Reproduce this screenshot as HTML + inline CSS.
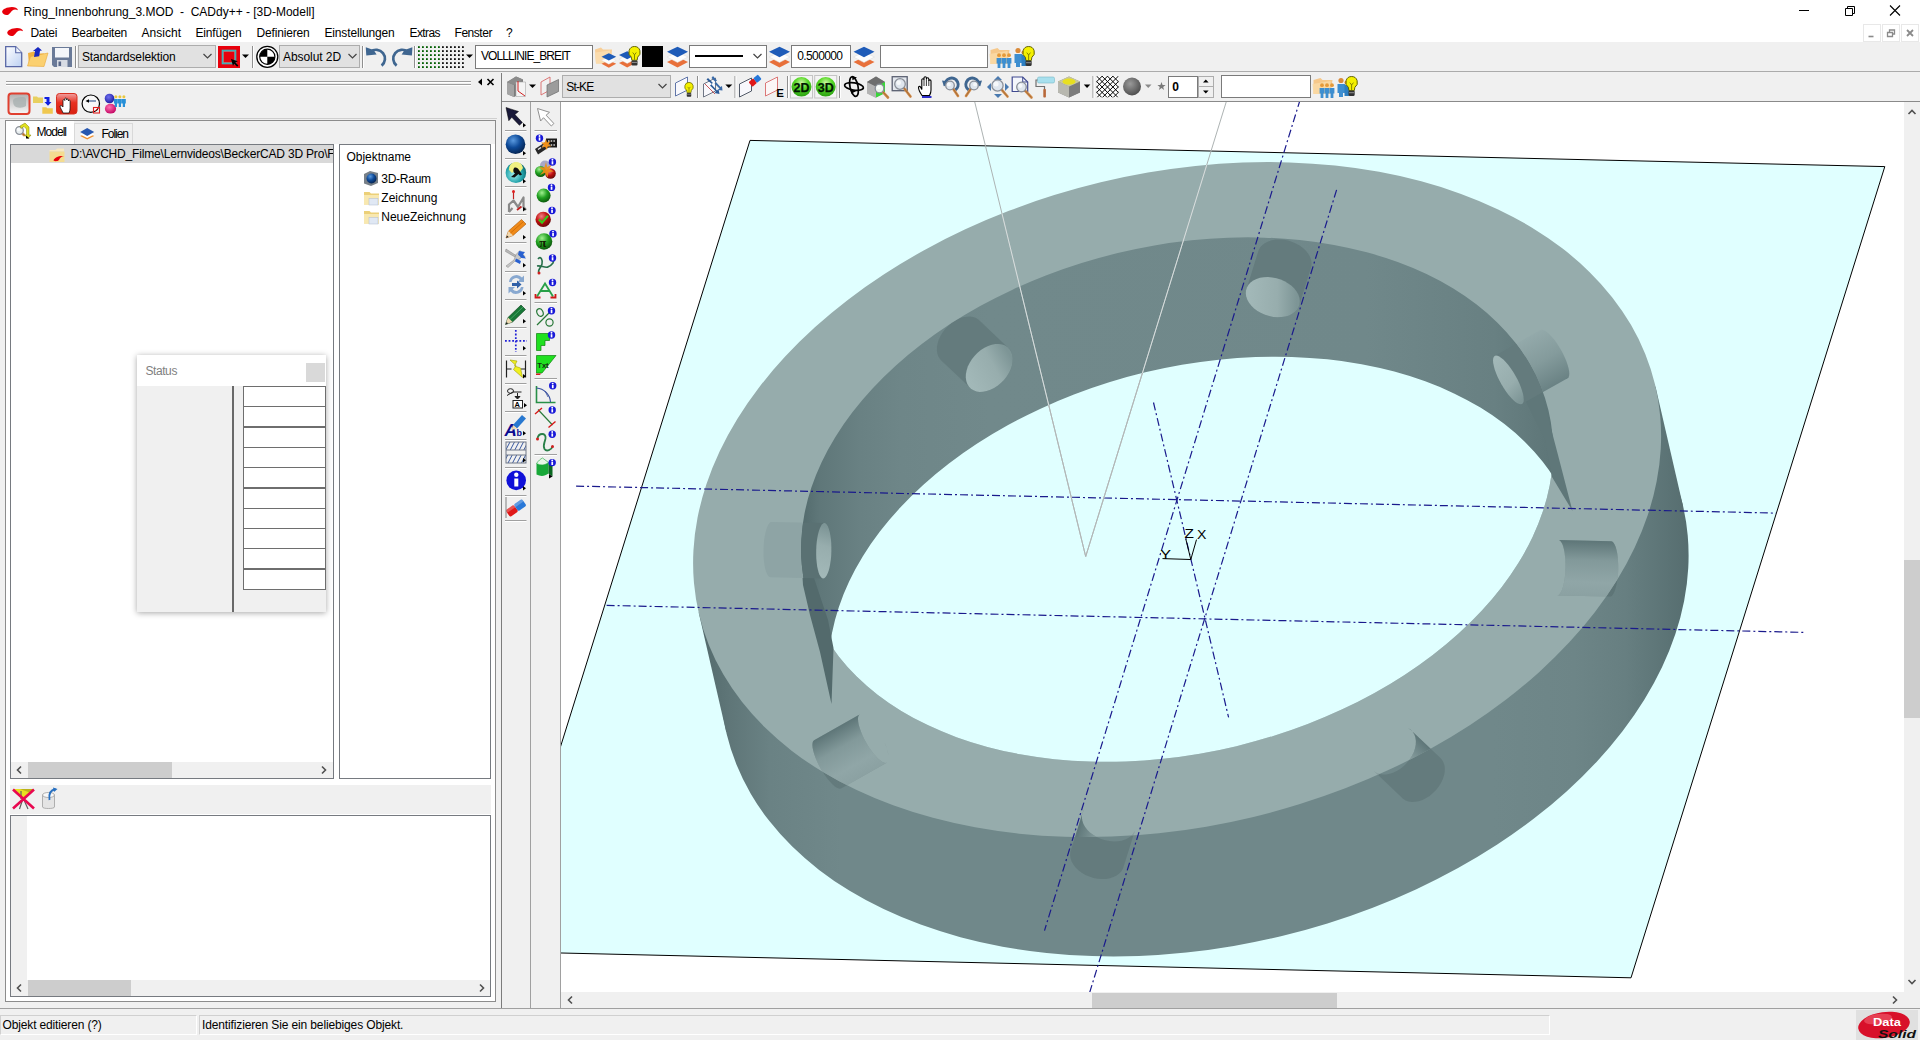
<!DOCTYPE html><html><head><meta charset="utf-8"><title>CADdy++</title><style>
html,body{margin:0;padding:0}
body{width:1920px;height:1040px;position:relative;overflow:hidden;background:#f0f0f0;font-family:"Liberation Sans",sans-serif;font-size:12px}
.t{position:absolute;white-space:pre;line-height:15px;height:15px}
.b{position:absolute;box-sizing:border-box}
</style></head><body>
<div class="b" style="left:0px;top:0px;width:1920px;height:42px;background:#fff;"></div>
<span class="t" style="left:23.5px;top:4.8px;font-size:12px;color:#000;letter-spacing:-0.009px;">Ring_Innenbohrung_3.MOD  -  CADdy++ - [3D-Modell]</span>
<span class="t" style="left:30.5px;top:25.8px;font-size:12px;color:#000;letter-spacing:-0.302px;">Datei</span>
<span class="t" style="left:71.5px;top:25.8px;font-size:12px;color:#000;letter-spacing:-0.254px;">Bearbeiten</span>
<span class="t" style="left:141.5px;top:25.8px;font-size:12px;color:#000;letter-spacing:0.021px;">Ansicht</span>
<span class="t" style="left:195.5px;top:25.8px;font-size:12px;color:#000;letter-spacing:-0.171px;">Einfügen</span>
<span class="t" style="left:256.5px;top:25.8px;font-size:12px;color:#000;letter-spacing:-0.169px;">Definieren</span>
<span class="t" style="left:324.5px;top:25.8px;font-size:12px;color:#000;letter-spacing:-0.158px;">Einstellungen</span>
<span class="t" style="left:409.5px;top:25.8px;font-size:12px;color:#000;letter-spacing:-0.584px;">Extras</span>
<span class="t" style="left:454.5px;top:25.8px;font-size:12px;color:#000;letter-spacing:-0.454px;">Fenster</span>
<span class="t" style="left:506.0px;top:25.8px;font-size:12px;color:#000;letter-spacing:-1.673px;">?</span>
<div class="b" style="left:0px;top:42px;width:1920px;height:29px;background:#f0f0f0;"></div>
<div class="b" style="left:0px;top:71px;width:1920px;height:1px;background:#ababab;"></div>
<div class="b" style="left:78px;top:45px;width:138px;height:23px;background:#e1e1e1;border:1px solid #adadad;"></div>
<span class="t" style="left:82.0px;top:49.8px;font-size:12px;color:#000;letter-spacing:-0.150px;">Standardselektion</span>
<div class="b" style="left:279px;top:45px;width:81px;height:23px;background:#e1e1e1;border:1px solid #adadad;"></div>
<span class="t" style="left:283.0px;top:49.8px;font-size:12px;color:#000;letter-spacing:-0.070px;">Absolut 2D</span>
<div class="b" style="left:475px;top:45px;width:118px;height:24px;background:#fff;border:1px solid #7a7a7a;"></div>
<span class="t" style="left:481.0px;top:48.8px;font-size:12px;color:#000;letter-spacing:-0.914px;">VOLLLINIE_BREIT</span>
<div class="b" style="left:642px;top:46px;width:21px;height:21px;background:#000;"></div>
<div class="b" style="left:689px;top:45px;width:78px;height:23px;background:#fff;border:1px solid #7a7a7a;"></div>
<div class="b" style="left:695px;top:55px;width:48px;height:2px;background:#000;"></div>
<div class="b" style="left:791px;top:45px;width:60px;height:23px;background:#fff;border:1px solid #7a7a7a;"></div>
<span class="t" style="left:797.3px;top:48.8px;font-size:12px;color:#000;letter-spacing:-0.631px;">0.500000</span>
<div class="b" style="left:880px;top:45px;width:108px;height:23px;background:#fff;border:1px solid #7a7a7a;"></div>
<div class="b" style="left:501px;top:73px;width:1px;height:935px;background:#7c7c7c;"></div>
<div class="b" style="left:562px;top:75px;width:109px;height:23px;background:#e1e1e1;border:1px solid #adadad;"></div>
<span class="t" style="left:566.3px;top:79.8px;font-size:12px;color:#000;letter-spacing:-0.869px;">St-KE</span>
<div class="b" style="left:1168px;top:76px;width:30px;height:22px;background:#fff;border:1px solid #7a7a7a;"></div>
<span class="t" style="left:1172.3px;top:79.8px;font-size:12px;color:#000;letter-spacing:-0.373px;font-weight:bold;">0</span>
<div class="b" style="left:1198px;top:76px;width:16px;height:22px;background:#f0f0f0;border:1px solid #adadad;"></div>
<div class="b" style="left:1198px;top:86px;width:16px;height:1px;background:#adadad;"></div>
<div class="b" style="left:1221px;top:75px;width:90px;height:23px;background:#fff;border:1px solid #7a7a7a;"></div>
<div class="b" style="left:502px;top:101px;width:1418px;height:1px;background:#8a8a8a;"></div>
<div class="b" style="left:530px;top:102px;width:1px;height:906px;background:#a0a0a0;"></div>
<div class="b" style="left:560px;top:102px;width:1px;height:906px;background:#a0a0a0;"></div>
<div class="b" style="left:1904px;top:102px;width:16px;height:906px;background:#f0f0f0;"></div>
<div class="b" style="left:561px;top:992px;width:1359px;height:16px;background:#f0f0f0;"></div>
<div class="b" style="left:1904px;top:560px;width:16px;height:158px;background:#cdcdcd;"></div>
<div class="b" style="left:1092px;top:993px;width:245px;height:15px;background:#cdcdcd;"></div>
<div class="b" style="left:0px;top:1008px;width:1920px;height:1px;background:#a0a0a0;"></div>
<div class="b" style="left:0px;top:1015px;width:197px;height:20px;border:1px solid #d0d0d0;border-right-color:#fff;border-bottom-color:#fff"></div>
<div class="b" style="left:199px;top:1015px;width:1351px;height:20px;border:1px solid #d0d0d0;border-right-color:#fff;border-bottom-color:#fff"></div>
<span class="t" style="left:2.6px;top:1017.8px;font-size:12px;color:#000;letter-spacing:-0.152px;">Objekt editieren (?)</span>
<span class="t" style="left:202.0px;top:1017.8px;font-size:12px;color:#000;letter-spacing:-0.134px;">Identifizieren Sie ein beliebiges Objekt.</span>
<div class="b" style="left:6px;top:81px;width:465px;height:1px;background:#a0a0a0;"></div>
<div class="b" style="left:6px;top:82px;width:465px;height:1px;background:#fff;"></div>
<div class="b" style="left:6px;top:84px;width:465px;height:1px;background:#a0a0a0;"></div>
<div class="b" style="left:6px;top:85px;width:465px;height:1px;background:#fff;"></div>
<div class="b" style="left:0px;top:118px;width:497px;height:1px;background:#cfcfcf;"></div>
<div class="b" style="left:5px;top:120px;width:491px;height:882px;background:#fff;border:1px solid #8c8c8c;"></div>
<div class="b" style="left:6px;top:121px;width:489px;height:23px;background:#f0f0f0;"></div>
<div class="b" style="left:6px;top:121px;width:68px;height:24px;background:#fff;"></div>
<div class="b" style="left:74px;top:123px;width:59px;height:21px;background:#f0f0f0;border:1px solid #d9d9d9;border-bottom:none"></div>
<span class="t" style="left:36.6px;top:124.8px;font-size:12px;color:#000;letter-spacing:-0.991px;">Modell</span>
<span class="t" style="left:101.5px;top:126.8px;font-size:12px;color:#000;letter-spacing:-1.030px;">Folien</span>
<div class="b" style="left:10px;top:144px;width:324px;height:635px;background:#fff;border:1px solid #767a80;"></div>
<div class="b" style="left:11px;top:145px;width:322px;height:18px;background:#d9d9d9;"></div>
<div class="b" style="left:11px;top:145px;width:322px;height:18px;overflow:hidden"><span class="t" style="left:59.6px;top:1.8px;font-size:12px;color:#000;letter-spacing:-0.182px;">D:\AVCHD_Filme\Lernvideos\BeckerCAD 3D Pro\F</span></div>
<div class="b" style="left:11px;top:762px;width:322px;height:16px;background:#f0f0f0;"></div>
<div class="b" style="left:28px;top:762px;width:144px;height:16px;background:#cdcdcd;"></div>
<div class="b" style="left:339px;top:144px;width:152px;height:635px;background:#fff;border:1px solid #767a80;"></div>
<span class="t" style="left:346.5px;top:149.8px;font-size:12px;color:#000;letter-spacing:-0.019px;">Objektname</span>
<span class="t" style="left:381.3px;top:171.8px;font-size:12px;color:#000;letter-spacing:-0.263px;">3D-Raum</span>
<span class="t" style="left:381.3px;top:190.8px;font-size:12px;color:#000;letter-spacing:0.018px;">Zeichnung</span>
<span class="t" style="left:381.3px;top:209.8px;font-size:12px;color:#000;letter-spacing:-0.017px;">NeueZeichnung</span>
<div class="b" style="left:10px;top:785px;width:481px;height:29px;background:#f0f0f0;"></div>
<div class="b" style="left:10px;top:815px;width:481px;height:182px;background:#fff;border:1px solid #767a80;"></div>
<div class="b" style="left:11px;top:816px;width:16px;height:164px;background:#f0f0f0;"></div>
<div class="b" style="left:11px;top:980px;width:479px;height:16px;background:#f0f0f0;"></div>
<div class="b" style="left:28px;top:980px;width:103px;height:16px;background:#cdcdcd;"></div>
<div class="b" style="left:137px;top:355px;width:189px;height:257px;background:#f0f0f0;box-shadow:0 1px 6px rgba(0,0,0,.35)"></div>
<div class="b" style="left:137px;top:355px;width:189px;height:31px;background:#fff;"></div>
<span class="t" style="left:145.4px;top:363.8px;font-size:12px;color:#7f7f7f;letter-spacing:-0.403px;">Status</span>
<div class="b" style="left:306px;top:363px;width:19px;height:19px;background:#d9d9d9;"></div>
<div class="b" style="left:232px;top:386px;width:2px;height:226px;background:#696969;"></div>
<div class="b" style="left:243px;top:386px;width:83px;height:21px;background:#fff;border:1px solid #6e6e6e;"></div>
<div class="b" style="left:243px;top:406px;width:83px;height:21px;background:#fff;border:1px solid #6e6e6e;"></div>
<div class="b" style="left:243px;top:427px;width:83px;height:21px;background:#fff;border:1px solid #6e6e6e;"></div>
<div class="b" style="left:243px;top:447px;width:83px;height:21px;background:#fff;border:1px solid #6e6e6e;"></div>
<div class="b" style="left:243px;top:467px;width:83px;height:21px;background:#fff;border:1px solid #6e6e6e;"></div>
<div class="b" style="left:243px;top:488px;width:83px;height:21px;background:#fff;border:1px solid #6e6e6e;"></div>
<div class="b" style="left:243px;top:508px;width:83px;height:21px;background:#fff;border:1px solid #6e6e6e;"></div>
<div class="b" style="left:243px;top:528px;width:83px;height:21px;background:#fff;border:1px solid #6e6e6e;"></div>
<div class="b" style="left:243px;top:548px;width:83px;height:21px;background:#fff;border:1px solid #6e6e6e;"></div>
<div class="b" style="left:243px;top:569px;width:83px;height:21px;background:#fff;border:1px solid #6e6e6e;"></div>
<svg width="1920" height="1040" viewBox="0 0 1920 1040" style="position:absolute;left:0;top:0">
<g transform="translate(1.9,7)"><path d="M0.2,4.6C0.8,2 5,0.2 10,0C13,0 15.6,1.2 16.1,3.2C14,2.3 12,2.4 10.5,3.4C9,4.6 8,6.6 6.4,7.7C4,8.5 0.3,7.6 0.2,4.6Z" fill="#e8000a"/></g><g transform="translate(7,28)"><path d="M0.2,4.6C0.8,2 5,0.2 10,0C13,0 15.6,1.2 16.1,3.2C14,2.3 12,2.4 10.5,3.4C9,4.6 8,6.6 6.4,7.7C4,8.5 0.3,7.6 0.2,4.6Z" fill="#e8000a"/></g><g transform="translate(5,46)"><defs><linearGradient id="gnd" x1="0" y1="0" x2="1" y2="1"><stop offset="0" stop-color="#fff"/><stop offset="1" stop-color="#bcd0f2"/></linearGradient></defs><path d="M.7,.7h10l6,6v14h-16z" fill="url(#gnd)" stroke="#5867a6" stroke-width="1.3"/><path d="M10.7,.7v6h6" fill="#eef3fc" stroke="#5867a6" stroke-width="1.1"/></g><g transform="translate(27,47)"><path d="M1,6l6,-1.5l2,2h8l-1,12h-14z" fill="#f0b040"/><path d="M0.5,19l3,-9.5l17.5,-3.5l-4,13.5z" fill="#fbd070" stroke="#e8a838" stroke-width=".6"/><path d="M7,10l1,-6h-2l5,-4l4,3.5l-2,.3l-.8,5.5z" fill="#1828c0"/></g><g transform="translate(52,47)"><path d="M0,0h20v20h-18l-2,-2z" fill="#6a7a98"/><rect x="3" y="1" width="14" height="9.5" fill="#f4f6fa"/><rect x="5" y="13" width="10.5" height="7" fill="#d8dce4"/><rect x="6.5" y="14.5" width="2.6" height="4.5" fill="#5a6888"/></g><path d="M75.5,46V68" stroke="#8f8f8f" stroke-width="1"/><path d="M76.5,46V68" stroke="#fff" stroke-width="1"/><path d="M203.5,54l4,4l4,-4" fill="none" stroke="#444" stroke-width="1.2"/><g transform="translate(218,46)"><rect width="22" height="22" fill="#e8000c"/><rect x="4.3" y="4.3" width="13.4" height="13.4" fill="none" stroke="#30c0c8" stroke-width="1.2"/><rect x="5.4" y="5.4" width="11.2" height="11.2" fill="none" stroke="#909090" stroke-width=".8"/><path d="M13,13l6.8,2.2l-2.4,1.2l3,3l-1.3,1.3l-3,-3l-1.1,2.4z" fill="#000"/></g><path d="M242,54.5h7l-3.5,3.5z" fill="#000"/><path d="M252.5,46V68" stroke="#8f8f8f" stroke-width="1"/><path d="M253.5,46V68" stroke="#fff" stroke-width="1"/><g transform="translate(267.3,56.8)"><circle r="10.5" fill="#fff" stroke="#000" stroke-width="1.3"/><circle r="7.6" fill="#fff" stroke="#000" stroke-width="1.2"/><path d="M0,0v-7.6a7.6,7.6 0 0 0 -7.6,7.6zM0,0v7.6a7.6,7.6 0 0 0 7.6,-7.6z" fill="#000"/></g><path d="M348.5,54l4,4l4,-4" fill="none" stroke="#444" stroke-width="1.2"/><path d="M362.5,46V68" stroke="#8f8f8f" stroke-width="1"/><path d="M363.5,46V68" stroke="#fff" stroke-width="1"/><g transform="translate(366,47)"><path d="M4.5,4.7A8.8,8.8 0 1 1 15.6,18.6" fill="none" stroke="#3f6690" stroke-width="2.7"/><path d="M-0.2,0.3L7.6,3L10.6,7.6L0.3,8.6Z" fill="#3f6690"/></g><g transform="translate(412.2,47) scale(-1,1)"><path d="M4.5,4.7A8.8,8.8 0 1 1 15.6,18.6" fill="none" stroke="#3f6690" stroke-width="2.7"/><path d="M-0.2,0.3L7.6,3L10.6,7.6L0.3,8.6Z" fill="#3f6690"/></g><path d="M414.5,46V68" stroke="#8f8f8f" stroke-width="1"/><path d="M415.5,46V68" stroke="#fff" stroke-width="1"/><rect x="418.0" y="46.2" width="1.8" height="1.8" fill="#005c00"/><rect x="422.0" y="46.2" width="1.8" height="1.8" fill="#005c00"/><rect x="426.0" y="46.2" width="1.8" height="1.8" fill="#005c00"/><rect x="430.0" y="46.2" width="1.8" height="1.8" fill="#005c00"/><rect x="434.0" y="46.2" width="1.8" height="1.8" fill="#005c00"/><rect x="438.0" y="46.2" width="1.8" height="1.8" fill="#005c00"/><rect x="442.0" y="46.2" width="1.8" height="1.8" fill="#111"/><rect x="446.0" y="46.2" width="1.8" height="1.8" fill="#111"/><rect x="450.0" y="46.2" width="1.8" height="1.8" fill="#111"/><rect x="454.0" y="46.2" width="1.8" height="1.8" fill="#111"/><rect x="458.0" y="46.2" width="1.8" height="1.8" fill="#111"/><rect x="462.0" y="46.2" width="1.8" height="1.8" fill="#111"/><rect x="418.0" y="50.2" width="1.8" height="1.8" fill="#005c00"/><rect x="422.0" y="50.2" width="1.8" height="1.8" fill="#005c00"/><rect x="426.0" y="50.2" width="1.8" height="1.8" fill="#005c00"/><rect x="430.0" y="50.2" width="1.8" height="1.8" fill="#005c00"/><rect x="434.0" y="50.2" width="1.8" height="1.8" fill="#005c00"/><rect x="438.0" y="50.2" width="1.8" height="1.8" fill="#005c00"/><rect x="442.0" y="50.2" width="1.8" height="1.8" fill="#111"/><rect x="446.0" y="50.2" width="1.8" height="1.8" fill="#111"/><rect x="450.0" y="50.2" width="1.8" height="1.8" fill="#111"/><rect x="454.0" y="50.2" width="1.8" height="1.8" fill="#111"/><rect x="458.0" y="50.2" width="1.8" height="1.8" fill="#111"/><rect x="462.0" y="50.2" width="1.8" height="1.8" fill="#111"/><rect x="418.0" y="54.2" width="1.8" height="1.8" fill="#005c00"/><rect x="422.0" y="54.2" width="1.8" height="1.8" fill="#005c00"/><rect x="426.0" y="54.2" width="1.8" height="1.8" fill="#005c00"/><rect x="430.0" y="54.2" width="1.8" height="1.8" fill="#005c00"/><rect x="434.0" y="54.2" width="1.8" height="1.8" fill="#005c00"/><rect x="438.0" y="54.2" width="1.8" height="1.8" fill="#005c00"/><rect x="442.0" y="54.2" width="1.8" height="1.8" fill="#111"/><rect x="446.0" y="54.2" width="1.8" height="1.8" fill="#111"/><rect x="450.0" y="54.2" width="1.8" height="1.8" fill="#111"/><rect x="454.0" y="54.2" width="1.8" height="1.8" fill="#111"/><rect x="458.0" y="54.2" width="1.8" height="1.8" fill="#111"/><rect x="462.0" y="54.2" width="1.8" height="1.8" fill="#111"/><rect x="418.0" y="58.2" width="1.8" height="1.8" fill="#005c00"/><rect x="422.0" y="58.2" width="1.8" height="1.8" fill="#005c00"/><rect x="426.0" y="58.2" width="1.8" height="1.8" fill="#005c00"/><rect x="430.0" y="58.2" width="1.8" height="1.8" fill="#005c00"/><rect x="434.0" y="58.2" width="1.8" height="1.8" fill="#005c00"/><rect x="438.0" y="58.2" width="1.8" height="1.8" fill="#005c00"/><rect x="442.0" y="58.2" width="1.8" height="1.8" fill="#111"/><rect x="446.0" y="58.2" width="1.8" height="1.8" fill="#111"/><rect x="450.0" y="58.2" width="1.8" height="1.8" fill="#111"/><rect x="454.0" y="58.2" width="1.8" height="1.8" fill="#111"/><rect x="458.0" y="58.2" width="1.8" height="1.8" fill="#111"/><rect x="462.0" y="58.2" width="1.8" height="1.8" fill="#111"/><rect x="418.0" y="62.2" width="1.8" height="1.8" fill="#005c00"/><rect x="422.0" y="62.2" width="1.8" height="1.8" fill="#005c00"/><rect x="426.0" y="62.2" width="1.8" height="1.8" fill="#005c00"/><rect x="430.0" y="62.2" width="1.8" height="1.8" fill="#005c00"/><rect x="434.0" y="62.2" width="1.8" height="1.8" fill="#005c00"/><rect x="438.0" y="62.2" width="1.8" height="1.8" fill="#005c00"/><rect x="442.0" y="62.2" width="1.8" height="1.8" fill="#111"/><rect x="446.0" y="62.2" width="1.8" height="1.8" fill="#111"/><rect x="450.0" y="62.2" width="1.8" height="1.8" fill="#111"/><rect x="454.0" y="62.2" width="1.8" height="1.8" fill="#111"/><rect x="458.0" y="62.2" width="1.8" height="1.8" fill="#111"/><rect x="462.0" y="62.2" width="1.8" height="1.8" fill="#111"/><rect x="418.0" y="66.2" width="1.8" height="1.8" fill="#005c00"/><rect x="422.0" y="66.2" width="1.8" height="1.8" fill="#005c00"/><rect x="426.0" y="66.2" width="1.8" height="1.8" fill="#005c00"/><rect x="430.0" y="66.2" width="1.8" height="1.8" fill="#005c00"/><rect x="434.0" y="66.2" width="1.8" height="1.8" fill="#005c00"/><rect x="438.0" y="66.2" width="1.8" height="1.8" fill="#005c00"/><rect x="442.0" y="66.2" width="1.8" height="1.8" fill="#111"/><rect x="446.0" y="66.2" width="1.8" height="1.8" fill="#111"/><rect x="450.0" y="66.2" width="1.8" height="1.8" fill="#111"/><rect x="454.0" y="66.2" width="1.8" height="1.8" fill="#111"/><rect x="458.0" y="66.2" width="1.8" height="1.8" fill="#111"/><rect x="462.0" y="66.2" width="1.8" height="1.8" fill="#111"/><path d="M466,54.5h7l-3.5,3.5z" fill="#000"/><g transform="translate(595,46.5)"><path d="M0,3l6,-2l2,2h9l-1,14h-15z" fill="#f8cf98"/><path d="M0,6l15,-2v13h-14z" fill="#fbdcae" opacity=".95"/><g transform="translate(6.5,6.5) scale(0.7)"><path d="M0,15.5l10.5,-5l10.5,5l-10.5,5.5z" fill="#e8703a"/><path d="M0,10.5l10.5,-5l10.5,5l-10.5,5.5z" fill="#fdfdfd" stroke="#d8d8d8" stroke-width=".5"/><path d="M0,5.2l10.5,-5l10.5,5l-10.5,5.5z" fill="#1e5bb8"/></g></g><g transform="translate(619,46)"><g transform="translate(0,5) scale(0.78)"><path d="M0,15.5l10.5,-5l10.5,5l-10.5,5.5z" fill="#e8703a"/><path d="M0,10.5l10.5,-5l10.5,5l-10.5,5.5z" fill="#fdfdfd" stroke="#d8d8d8" stroke-width=".5"/><path d="M0,5.2l10.5,-5l10.5,5l-10.5,5.5z" fill="#1e5bb8"/></g><g transform="translate(9.5,0)"><g transform="translate(0,0)"><path d="M6,0.5a5.6,5.8 0 0 1 3.2,10.6l-.6,3.2h-5.2l-.6,-3.2a5.6,5.8 0 0 1 3.2,-10.6z" fill="#f4f000" stroke="#555500" stroke-width=".9"/><path d="M4.2,6.5l1.8,2.3l1.8,-2.3M6,8.8v5" fill="none" stroke="#6b6b00" stroke-width=".8"/><rect x="3" y="14.5" width="6" height="5" rx="1" fill="#333"/><path d="M3.5,16.4h5" stroke="#aaa" stroke-width=".8"/></g></g></g><g transform="translate(667,46.5)"><path d="M0,15.5l10.5,-5l10.5,5l-10.5,5.5z" fill="#e8703a"/><path d="M0,10.5l10.5,-5l10.5,5l-10.5,5.5z" fill="#fdfdfd" stroke="#d8d8d8" stroke-width=".5"/><path d="M0,5.2l10.5,-5l10.5,5l-10.5,5.5z" fill="#1e5bb8"/></g><path d="M753.5,54l4,4l4,-4" fill="none" stroke="#444" stroke-width="1.2"/><g transform="translate(769,46.5)"><path d="M0,15.5l10.5,-5l10.5,5l-10.5,5.5z" fill="#e8703a"/><path d="M0,10.5l10.5,-5l10.5,5l-10.5,5.5z" fill="#fdfdfd" stroke="#d8d8d8" stroke-width=".5"/><path d="M0,5.2l10.5,-5l10.5,5l-10.5,5.5z" fill="#1e5bb8"/></g><g transform="translate(853.5,46.5)"><path d="M0,15.5l10.5,-5l10.5,5l-10.5,5.5z" fill="#e8703a"/><path d="M0,10.5l10.5,-5l10.5,5l-10.5,5.5z" fill="#fdfdfd" stroke="#d8d8d8" stroke-width=".5"/><path d="M0,5.2l10.5,-5l10.5,5l-10.5,5.5z" fill="#1e5bb8"/></g><g transform="translate(989.5,46)"><path d="M1,4l7,-2l2,2h10l-2,14h-17z" fill="#f6c88a"/><path d="M0,8l18,-3v13h-17z" fill="#fbd9a4" opacity=".9"/><g transform="translate(6.5,7)"><circle cx="3" cy="2.2" r="1.9" fill="#e59a3a"/><path d="M0.6,5h4.8v5.5h-1v4.5h-2.8v-4.5h-1z" fill="#3d8ed0"/><circle cx="8" cy="2.2" r="1.9" fill="#e59a3a"/><path d="M5.6,5h4.8v5.5h-1v4.5h-2.8v-4.5h-1z" fill="#3d8ed0"/><circle cx="13" cy="2.2" r="1.9" fill="#e59a3a"/><path d="M10.6,5h4.8v5.5h-1v4.5h-2.8v-4.5h-1z" fill="#3d8ed0"/></g></g><g transform="translate(1014,45.5)"><g transform="translate(0,2)"><circle cx="4" cy="3" r="2.6" fill="#d98a3a"/><path d="M0.5,6.5h7.5v9h-2v4h-4v-4h-1.5z" fill="#3d8ed0"/><circle cx="9.5" cy="5" r="2" fill="#d98a3a"/><path d="M7.5,7.5h5v11h-5z" fill="#2d7ec0"/></g><g transform="translate(8.5,0.5)"><g transform="translate(0,0) scale(1.02)"><path d="M6,0.5a5.6,5.8 0 0 1 3.2,10.6l-.6,3.2h-5.2l-.6,-3.2a5.6,5.8 0 0 1 3.2,-10.6z" fill="#f4f000" stroke="#555500" stroke-width=".9"/><path d="M4.2,6.5l1.8,2.3l1.8,-2.3M6,8.8v5" fill="none" stroke="#6b6b00" stroke-width=".8"/><rect x="3" y="14.5" width="6" height="5" rx="1" fill="#333"/><path d="M3.5,16.4h5" stroke="#aaa" stroke-width=".8"/></g></g></g><path d="M1799,10.500h10" stroke="#000" stroke-width="1"/><path d="M1845.5,8.5h7v7h-7zM1847.5,8.5v-2h7v7h-2" fill="none" stroke="#000" stroke-width="1"/><path d="M1890,5.5l10,10M1900,5.5l-10,10" stroke="#000" stroke-width="1.1"/><rect x="1863.5" y="24.5" width="17" height="17" fill="#fff" stroke="#e8e8e8"/><rect x="1882.5" y="24.5" width="17" height="17" fill="#fff" stroke="#e8e8e8"/><rect x="1901.5" y="24.5" width="17" height="17" fill="#fff" stroke="#e8e8e8"/><path d="M1868.5,36.5h5" stroke="#8a8a8a" stroke-width="1.6"/><path d="M1887.5,32.5h5v4h-5zM1889.500,32v-2h5v4h-2" fill="none" stroke="#8a8a8a" stroke-width="1.3"/><path d="M1907,30l6,6M1913,30l-6,6" stroke="#8a8a8a" stroke-width="1.8"/>
<g transform="translate(507,76)"><path d="M0,6l9,-5.5l7,3v13l-9,4.5l-7,-3z" fill="#7c7c7c"/><path d="M0,6l7,3v12l-7,-3z" fill="#a4a4a4"/><path d="M0,6l9,-5.5l7,3l-9,5.5z" fill="#8c8c8c"/><path d="M9,6h9.5v14.5h-9.5z" fill="#f4f4f4" stroke="#a8a8a8" stroke-width=".6"/><path d="M11,5v10l7,5" fill="none" stroke="#d02020" stroke-width="1"/></g><path d="M529,84.5h7l-3.5,3.5z" fill="#000"/><g transform="translate(540.5,76)"><path d="M0.5,6l9,-5v13l-9,5z" fill="none" stroke="#d86a6a" stroke-width=".9"/><path d="M6.5,9l11.5,-5.5v12l-11.5,5.500z" fill="#9c9c9c" stroke="#6a6a6a" stroke-width=".7"/></g><path d="M658.5,84l4,4l4,-4" fill="none" stroke="#444" stroke-width="1.2"/><g transform="translate(675,76)"><path d="M0.5,7l12,-6v13l-12,6z" fill="#f8f8fc" stroke="#5068a0" stroke-width=".9"/><g transform="translate(9.5,6)"><g transform="translate(0,0) scale(0.75)"><path d="M6,0.5a5.6,5.8 0 0 1 3.2,10.6l-.6,3.2h-5.2l-.6,-3.2a5.6,5.8 0 0 1 3.2,-10.6z" fill="#f4f000" stroke="#555500" stroke-width=".9"/><path d="M4.2,6.5l1.8,2.3l1.8,-2.3M6,8.8v5" fill="none" stroke="#6b6b00" stroke-width=".8"/><rect x="3" y="14.5" width="6" height="5" rx="1" fill="#333"/><path d="M3.5,16.4h5" stroke="#aaa" stroke-width=".8"/></g></g></g><path d="M697.5,76V98" stroke="#8f8f8f" stroke-width="1"/><path d="M698.5,76V98" stroke="#fff" stroke-width="1"/><g transform="translate(703,76)"><path d="M0.500,8l12,-6v13l-12,6z" fill="#f8f8fc" stroke="#606878" stroke-width=".9"/><path d="M2,8l10,10" stroke="#c03030" stroke-width=".8"/><path d="M5,2l5,5l-2,1l6,6.500l1.500,-1.500l1,5l-5,-1l1.500,-1.500l-6,-6l2,-1.500l-5.500,-4.500z" fill="#2a5a98"/><path d="M10,0l4,4.500l-1.500,1l5,5.500l1.500,-1l.5,4.500l-4.500,-.5l1.500,-1.500l-5,-5l1.500,-1l-4.500,-4.500z" fill="#3a6aa8"/></g><path d="M725.3,84.5h7l-3.5,3.5z" fill="#000"/><path d="M735,76V98" stroke="#8f8f8f" stroke-width="1"/><path d="M736,76V98" stroke="#fff" stroke-width="1"/><g transform="translate(739,76)"><path d="M0.500,8l12,-6v13l-12,6z" fill="#f8f8fc" stroke="#404858" stroke-width=".9"/><g transform="translate(11.500,8.500) rotate(-40)"><rect x="0" y="-3" width="6" height="6" rx="1" fill="#e01818"/><rect x="6" y="-3" width="6" height="6" rx="1" fill="#2878d8"/></g></g><g transform="translate(765,76)"><path d="M0.500,7l12,-6v13l-12,6z" fill="#fbf6f6" stroke="#d86a6a" stroke-width=".9"/></g><text x="776.3" y="97" font-family="Liberation Sans, sans-serif" font-weight="bold" font-size="11.5" fill="#000">E</text><path d="M787.5,76V98" stroke="#8f8f8f" stroke-width="1"/><path d="M788.5,76V98" stroke="#fff" stroke-width="1"/><defs><radialGradient id="ggr" cx=".5" cy=".3" r=".7"><stop offset="0" stop-color="#d0f8a8"/><stop offset=".45" stop-color="#58d828"/><stop offset="1" stop-color="#2aa010"/></radialGradient></defs><rect x="790.5" y="75.500" width="22" height="22.500" fill="#f4f4f4" stroke="#c4c4c4" stroke-width="1"/><ellipse cx="801.5" cy="86.800" rx="10" ry="9.700" fill="url(#ggr)"/><text x="801.5" y="91.800" text-anchor="middle" font-family="Liberation Sans, sans-serif" font-weight="bold" font-size="12.5" fill="#001800" stroke="#001800" stroke-width=".25">2D</text><rect x="814.7" y="75.500" width="22" height="22.500" fill="#f4f4f4" stroke="#c4c4c4" stroke-width="1"/><ellipse cx="825.7" cy="86.800" rx="10" ry="9.700" fill="url(#ggr)"/><text x="825.7" y="91.800" text-anchor="middle" font-family="Liberation Sans, sans-serif" font-weight="bold" font-size="12.5" fill="#001800" stroke="#001800" stroke-width=".25">3D</text><path d="M839.5,76V98" stroke="#8f8f8f" stroke-width="1"/><path d="M840.5,76V98" stroke="#fff" stroke-width="1"/><g transform="translate(854,86.5)"><ellipse rx="9.500" ry="3.600" fill="none" stroke="#000" stroke-width="1.700" transform="rotate(8)"/><ellipse rx="4" ry="10" fill="none" stroke="#000" stroke-width="1.700" transform="rotate(-12)"/><path d="M-2,-10.500l5,1.500l-4.500,2.800z M-3,3l5,1.800l-4.800,2.400z" fill="#000"/></g><g transform="translate(867,76)"><path d="M0,6l9,-5.500l9,5.500v11l-9,4.500l-9,-4.500z" fill="#8a8a8a"/><path d="M0,6l9,4.500v11.500l-9,-4.500z" fill="#b4b4b4"/><path d="M0,6l9,-5.500l9,5.500l-9,4.500z" fill="#6e6e6e"/><path d="M9,10.500l9,-4.500v11l-9,4.500z" fill="#38d838"/><path d="M15.51,15.51L21,21.5" stroke="#d08a4a" stroke-width="2.6" stroke-linecap="round"/><path d="M15.51,15.51L21,21.5" stroke="#8a5a2a" stroke-width=".6"/><circle cx="12.5" cy="12.5" r="4.3" fill="#eef4ee" stroke="#8a8f98" stroke-width="1.3"/><circle cx="11.425" cy="11.425" r="1.935" fill="#fff" opacity=".7"/></g><g transform="translate(891.5,76)"><rect x=".7" y=".7" width="15" height="14" fill="#e4e8ee" stroke="#5a6070" stroke-width="1.300"/><path d="M12.209999999999999,11.709999999999999L19,20.5" stroke="#d08a4a" stroke-width="2.6" stroke-linecap="round"/><path d="M12.209999999999999,11.709999999999999L19,20.5" stroke="#8a5a2a" stroke-width=".6"/><circle cx="8.5" cy="8" r="5.3" fill="#dfe6ee" stroke="#8a8f98" stroke-width="1.3"/><circle cx="7.175" cy="6.675" r="2.385" fill="#fff" opacity=".7"/></g><g transform="translate(918,76.5)"><path d="M4,19c-2,-3 -3.500,-6 -3.500,-8c0,-1.500 1.500,-1.500 2.300,0l1,2v-9.500c0,-1.600 2.200,-1.600 2.200,0v-2c0,-1.700 2.400,-1.700 2.400,0v1c0,-1.700 2.400,-1.700 2.400,0v2c0,-1.500 2.200,-1.500 2.200,0v9c0,3 -1,4.500 -1.500,5.500z" fill="#fff" stroke="#000" stroke-width="1.100"/><path d="M6,3.500v6M8.400,2.500v7M10.800,4v5.500" stroke="#000" stroke-width=".8"/><rect x="4" y="19.600" width="9.500" height="1.800" fill="#1818c8"/></g><g transform="translate(942,76.5)"><path d="M3.200,9a6.500,6.500 0 1 1 10,4.500" fill="none" stroke="#3f6690" stroke-width="3"/><path d="M0,4l6.500,1l-4.500,5z" fill="#3f6690"/><path d="M11.01,12.01L16,19.5" stroke="#d08a4a" stroke-width="2.6" stroke-linecap="round"/><path d="M11.01,12.01L16,19.5" stroke="#8a5a2a" stroke-width=".6"/><circle cx="8" cy="9" r="4.3" fill="#dfe6ee" stroke="#8a8f98" stroke-width="1.3"/><circle cx="6.925" cy="7.925" r="1.935" fill="#fff" opacity=".7"/></g><g transform="translate(982,76.500) scale(-1,1)"><path d="M3.200,9a6.500,6.500 0 1 1 10,4.500" fill="none" stroke="#3f6690" stroke-width="3"/><path d="M0,4l6.500,1l-4.500,5z" fill="#3f6690"/><path d="M11.01,12.01L16,19.5" stroke="#d08a4a" stroke-width="2.6" stroke-linecap="round"/><path d="M11.01,12.01L16,19.5" stroke="#8a5a2a" stroke-width=".6"/><circle cx="8" cy="9" r="4.3" fill="#dfe6ee" stroke="#8a8f98" stroke-width="1.3"/><circle cx="6.925" cy="7.925" r="1.935" fill="#fff" opacity=".7"/></g><g transform="translate(987,76)"><path d="M11,0l4,4h-8z M11,22l4,-4h-8z M0,11l4,-4v8z M22,11l-4,-4v8z" fill="#4a7ab0"/><path d="M14.42,13.42L20.5,20.5" stroke="#d08a4a" stroke-width="2.6" stroke-linecap="round"/><path d="M14.42,13.42L20.5,20.5" stroke="#8a5a2a" stroke-width=".6"/><circle cx="10.5" cy="9.5" r="5.6" fill="#dfe6ee" stroke="#8a8f98" stroke-width="1.3"/><circle cx="9.1" cy="8.1" r="2.52" fill="#fff" opacity=".7"/></g><g transform="translate(1011.5,76)"><path d="M.7,1h10.500l5,5v9.500h-15.500z" fill="#f4f6fc" stroke="#404a90" stroke-width="1.200"/><path d="M11.200,1v5h5" fill="none" stroke="#404a90" stroke-width="1"/><path d="M13.36,14.36L20,21.5" stroke="#d08a4a" stroke-width="2.6" stroke-linecap="round"/><path d="M13.36,14.36L20,21.5" stroke="#8a5a2a" stroke-width=".6"/><circle cx="10" cy="11" r="4.8" fill="#dfe6ee" stroke="#8a8f98" stroke-width="1.3"/><circle cx="8.8" cy="9.8" r="2.16" fill="#fff" opacity=".7"/></g><g transform="translate(1036,77)"><rect x="1.500" y="0" width="17" height="6" rx="1.500" fill="#a8e0ee" stroke="#78b8c8" stroke-width=".6"/><path d="M1.500,3h-1.500v6.500h8.500v3" fill="none" stroke="#707070" stroke-width="1.200"/><rect x="7.300" y="12" width="2.600" height="8.500" rx=".8" fill="#b8683a"/></g><g transform="translate(1058,76)"><path d="M0,5.500l11,-5l11,5v11l-11,5l-11,-5z" fill="#8c8c8c"/><path d="M0,5.500l11,5v11l-11,-5z" fill="#b8b8b0"/><path d="M11,10.500l11,-5v11l-11,5z" fill="#7c7c7c"/><path d="M0,5.500l11,-5l11,5l-11,5z" fill="#c8c8a0"/><ellipse cx="11" cy="5.600" rx="6.500" ry="3" fill="#e8e020"/></g><path d="M1083.8,84.5h6.5l-3.25,3.5z" fill="#000"/><path d="M1093,76V98" stroke="#8f8f8f" stroke-width="1"/><path d="M1094,76V98" stroke="#fff" stroke-width="1"/><clipPath id="chh"><rect x="1096.500" y="76" width="22" height="21.500"/></clipPath><g clip-path="url(#chh)"><rect x="1096.500" y="76" width="22" height="21.500" fill="#fff"/><g stroke="#000" stroke-width="1"><path d="M1080.3,76l21.500,21.500" /><path d="M1102.3,76l-21.500,21.500"/><path d="M1085.7,76l21.500,21.500" /><path d="M1107.7,76l-21.500,21.500"/><path d="M1091.1,76l21.500,21.500" /><path d="M1113.1,76l-21.500,21.500"/><path d="M1096.5,76l21.500,21.500" /><path d="M1118.5,76l-21.500,21.500"/><path d="M1101.9,76l21.500,21.500" /><path d="M1123.9,76l-21.500,21.500"/><path d="M1107.3,76l21.500,21.500" /><path d="M1129.3,76l-21.500,21.500"/><path d="M1112.7,76l21.500,21.500" /><path d="M1134.7,76l-21.500,21.500"/></g></g><defs><radialGradient id="gsp" cx=".4" cy=".35" r=".7"><stop offset="0" stop-color="#9a9a9a"/><stop offset="1" stop-color="#4a4a4a"/></radialGradient></defs><circle cx="1132" cy="86.500" r="9" fill="url(#gsp)"/><path d="M1145,84.5h6.5l-3.25,3.5z" fill="#8a8a8a"/><path d="M1161.500,82l1.100,3h3l-2.400,1.900l.9,3.100l-2.600,-1.900l-2.600,1.900l.9,-3.100l-2.400,-1.900h3z" fill="#7a7a7a"/><path d="M1203,82.500l2.800,-3l2.800,3z M1203,90.500l2.800,3l2.800,-3z" fill="#000"/><g transform="translate(1312.5,76)"><path d="M1,4l7,-2l2,2h10l-2,14h-17z" fill="#f6c88a"/><path d="M0,8l18,-3v13h-17z" fill="#fbd9a4" opacity=".9"/><g transform="translate(6.5,7)"><circle cx="3" cy="2.2" r="1.9" fill="#e59a3a"/><path d="M0.6,5h4.8v5.5h-1v4.5h-2.8v-4.5h-1z" fill="#3d8ed0"/><circle cx="8" cy="2.2" r="1.9" fill="#e59a3a"/><path d="M5.6,5h4.8v5.5h-1v4.5h-2.8v-4.5h-1z" fill="#3d8ed0"/><circle cx="13" cy="2.2" r="1.9" fill="#e59a3a"/><path d="M10.6,5h4.8v5.5h-1v4.5h-2.8v-4.5h-1z" fill="#3d8ed0"/></g></g><g transform="translate(1337,75.5)"><g transform="translate(0,2)"><circle cx="4" cy="3" r="2.6" fill="#d98a3a"/><path d="M0.5,6.5h7.5v9h-2v4h-4v-4h-1.5z" fill="#3d8ed0"/><circle cx="9.5" cy="5" r="2" fill="#d98a3a"/><path d="M7.5,7.5h5v11h-5z" fill="#2d7ec0"/></g><g transform="translate(8.5,0.5)"><g transform="translate(0,0) scale(1.02)"><path d="M6,0.5a5.6,5.8 0 0 1 3.2,10.6l-.6,3.2h-5.2l-.6,-3.2a5.6,5.8 0 0 1 3.2,-10.6z" fill="#f4f000" stroke="#555500" stroke-width=".9"/><path d="M4.2,6.5l1.8,2.3l1.8,-2.3M6,8.8v5" fill="none" stroke="#6b6b00" stroke-width=".8"/><rect x="3" y="14.5" width="6" height="5" rx="1" fill="#333"/><path d="M3.5,16.4h5" stroke="#aaa" stroke-width=".8"/></g></g></g>
<defs><radialGradient id="pbl" cx=".38" cy=".3" r=".75"><stop offset="0" stop-color="#5a9ae0"/><stop offset=".5" stop-color="#0e4a98"/><stop offset="1" stop-color="#04204a"/></radialGradient><radialGradient id="pgr" cx=".38" cy=".3" r=".75"><stop offset="0" stop-color="#a0f090"/><stop offset=".5" stop-color="#20a020"/><stop offset="1" stop-color="#0a500a"/></radialGradient><radialGradient id="prd" cx=".38" cy=".3" r=".75"><stop offset="0" stop-color="#f08080"/><stop offset=".5" stop-color="#c01010"/><stop offset="1" stop-color="#600808"/></radialGradient><radialGradient id="pcy" cx=".4" cy=".6" r=".7"><stop offset="0" stop-color="#a0f0f0"/><stop offset=".6" stop-color="#20a0a8"/><stop offset="1" stop-color="#0a5a60"/></radialGradient></defs><path d="M505,130.5H526.5" stroke="#a0a0a0" stroke-width="1"/><path d="M505,131.5H526.5" stroke="#fff" stroke-width="1"/><path d="M505,158.5H526.5" stroke="#a0a0a0" stroke-width="1"/><path d="M505,159.5H526.5" stroke="#fff" stroke-width="1"/><path d="M505,186.5H526.5" stroke="#a0a0a0" stroke-width="1"/><path d="M505,187.5H526.5" stroke="#fff" stroke-width="1"/><path d="M505,214.5H526.5" stroke="#a0a0a0" stroke-width="1"/><path d="M505,215.5H526.5" stroke="#fff" stroke-width="1"/><path d="M505,242.5H526.5" stroke="#a0a0a0" stroke-width="1"/><path d="M505,243.5H526.5" stroke="#fff" stroke-width="1"/><path d="M505,271.5H526.5" stroke="#a0a0a0" stroke-width="1"/><path d="M505,272.5H526.5" stroke="#fff" stroke-width="1"/><path d="M505,299.5H526.5" stroke="#a0a0a0" stroke-width="1"/><path d="M505,300.5H526.5" stroke="#fff" stroke-width="1"/><path d="M505,327.5H526.5" stroke="#a0a0a0" stroke-width="1"/><path d="M505,328.5H526.5" stroke="#fff" stroke-width="1"/><path d="M505,355.5H526.5" stroke="#a0a0a0" stroke-width="1"/><path d="M505,356.5H526.5" stroke="#fff" stroke-width="1"/><path d="M505,383.5H526.5" stroke="#a0a0a0" stroke-width="1"/><path d="M505,384.5H526.5" stroke="#fff" stroke-width="1"/><path d="M505,411.5H526.5" stroke="#a0a0a0" stroke-width="1"/><path d="M505,412.5H526.5" stroke="#fff" stroke-width="1"/><path d="M505,439.5H526.5" stroke="#a0a0a0" stroke-width="1"/><path d="M505,440.5H526.5" stroke="#fff" stroke-width="1"/><path d="M505,467.5H526.5" stroke="#a0a0a0" stroke-width="1"/><path d="M505,468.5H526.5" stroke="#fff" stroke-width="1"/><path d="M505,495.5H526.5" stroke="#a0a0a0" stroke-width="1"/><path d="M505,496.5H526.5" stroke="#fff" stroke-width="1"/><path d="M505,520.5H526.5" stroke="#a0a0a0" stroke-width="1"/><path d="M505,521.5H526.5" stroke="#fff" stroke-width="1"/><path d="M534.5,130.5H557" stroke="#a0a0a0" stroke-width="1"/><path d="M534.5,131.5H557" stroke="#fff" stroke-width="1"/><path d="M534.5,302.5H557" stroke="#a0a0a0" stroke-width="1"/><path d="M534.5,303.5H557" stroke="#fff" stroke-width="1"/><path d="M534.5,378.5H557" stroke="#a0a0a0" stroke-width="1"/><path d="M534.5,379.5H557" stroke="#fff" stroke-width="1"/><path d="M534.5,454.5H557" stroke="#a0a0a0" stroke-width="1"/><path d="M534.5,455.5H557" stroke="#fff" stroke-width="1"/><path d="M506,107.500l12.500,4l-3.600,3l7.500,8l-3,2.800l-7.600,-8l-3,3.400z" fill="#1a1a3a" stroke="#000" stroke-width=".5"/><path d="M523,123l3,2.300l-3,2.300z" fill="#000"/><circle cx="515.500" cy="144.300" r="9.800" fill="url(#pbl)"/><path d="M523,151l3,2.300l-3,2.300z" fill="#000"/><circle cx="515.900" cy="172.700" r="10.300" fill="url(#pcy)"/><path d="M509,170a7,7 0 0 1 14,-2l-3,4l-5,-1l-3,2z" fill="#f0f080"/><path d="M514,168c2,-1 4,0 5,2l3,4.500l-2,1l-1.500,-1.500l-4,3.500l-3.500,-.5l4,-3.500c-1.500,-1 -2.500,-3 -1,-5.500z" fill="#101010"/><path d="M523,179l3,2.300l-3,2.300z" fill="#000"/><path d="M509,212v-7.500l4.500,-4l4.500,6.500l5.500,-9.500v9.500l2.500,3" fill="none" stroke="#8a8a8a" stroke-width="2.200" stroke-linejoin="round"/><path d="M509,212l3.500,-4" stroke="#8a8a8a" stroke-width="2"/><path d="M513.500,192v7" stroke="#c02020" stroke-width="1.200"/><circle cx="513.500" cy="191.500" r="1.500" fill="#e02020"/><path d="M517,210l4.500,-3.500" stroke="#c02020" stroke-width="1.800"/><path d="M523,207l3,2.300l-3,2.300z" fill="#000"/><path d="M506,238l2.500,-7l13,-11.500l4.500,4.500l-13,11.500z" fill="#f08a18" stroke="#a85808" stroke-width=".6"/><path d="M506,238l2.500,-7l4.500,4.500z" fill="#f0d8b0"/><path d="M506,238l1,-2.600l1.700,1.700z" fill="#202020"/><path d="M510.500,233l13,-11.500" stroke="#c86808" stroke-width=".8"/><path d="M523,235l3,2.300l-3,2.300z" fill="#000"/><path d="M506,249l10,6.500l6.500,-1.500l2.500,2.500l-7,2l-3,-1.500l-9.500,-5.500z" fill="#b8b8b8" stroke="#808080" stroke-width=".5"/><path d="M506,266l8,-6l2,-5.500l4,-4l1.500,1.500l-2.500,3.500l3,-.5l-2,4l-4,1l-8,7.500z" fill="#c8c8c8" stroke="#808080" stroke-width=".5"/><path d="M519,251l6,1l-2,2.500l3,4l-4.500,-.5l-3.500,-3.500z" fill="#2860d0"/><path d="M516,258.500l5,2.500l-1,3l-5,-2.500z" fill="#2860d0"/><path d="M523,263l3,2.300l-3,2.300z" fill="#000"/><path d="M509,282a7.500,7.500 0 0 1 13,-4.500l2,-2v6.500h-6.500l2.300,-2.300a4.800,4.800 0 0 0 -8.300,2.300z" fill="#88a8d0"/><path d="M523.500,287a7.500,7.500 0 0 1 -13,4.500l-2,2v-6.500h6.500l-2.300,2.300a4.800,4.800 0 0 0 8.300,-2.300z" fill="#88a8d0"/><path d="M512,283h5v-2.500l4.500,4l-4.500,4v-2.500h-5z" fill="#3060a8"/><path d="M523,291l3,2.300l-3,2.300z" fill="#000"/><path d="M505.500,324.500l2.500,-7l13,-12.500l4.500,4.500l-13,12.500z" fill="#187838" stroke="#0a4018" stroke-width=".6"/><path d="M505.500,324.500l2.500,-7l4.500,4.500z" fill="#f0d8b0"/><path d="M505.500,324.500l1,-2.600l1.700,1.700z" fill="#202020"/><path d="M510,319.500l13,-12.500" stroke="#48a868" stroke-width=".9"/><path d="M523,319l3,2.300l-3,2.300z" fill="#000"/><path d="M505,340.800h22M515.800,330v22" stroke="#2020d8" stroke-width="1.700" stroke-dasharray="1.800 1.800"/><path d="M523,346l3,2.300l-3,2.300z" fill="#000"/><path d="M506.500,360.500v17M525.500,360.500v17M506.500,369h5M521,369h4.500" stroke="#202020" stroke-width="1.200" fill="none"/><path d="M510,360l7,1l-2.500,5l6,2l2,9.500l-9,-8l2.500,-4z" fill="#f0f020" stroke="#a0a000" stroke-width=".6"/><path d="M523,374l3,2.300l-3,2.300z" fill="#000"/><ellipse cx="510.500" cy="391" rx="3" ry="2.300" fill="none" stroke="#202020" stroke-width="1"/><path d="M507,395.500l6,-3.500h8.500" fill="none" stroke="#202020" stroke-width="1"/><path d="M517.500,393v5M515,396.500l2.500,2.500l2.500,-2.500z" stroke="#202020" stroke-width="1" fill="#202020"/><rect x="513" y="400.500" width="9.500" height="7.500" fill="#fff" stroke="#202020" stroke-width="1"/><text x="514.600" y="407.300" font-family="Liberation Sans, sans-serif" font-weight="bold" font-size="7.500" fill="#000">A</text><path d="M524,403l3,2.300l-3,2.300z" fill="#000"/><text x="504.500" y="435.500" font-family="Liberation Sans, sans-serif" font-weight="bold" font-style="italic" font-size="17" fill="#0a0a90">A</text><text x="516.500" y="435.500" font-family="Liberation Sans, sans-serif" font-weight="bold" font-size="9" fill="#0a0a90">b</text><path d="M513,425l9,-10l4,3.500l-9,10z" fill="#2878d0"/><path d="M513,425l-1.500,5l5.500,-1.500z" fill="#f0d8b0"/><path d="M523,431l3,2.300l-3,2.300z" fill="#000"/><clipPath id="phc"><path d="M506,442h20v8h-20z M506,455h20v8h-20z"/></clipPath><g clip-path="url(#phc)" stroke="#3858a0" stroke-width="1"><path d="M494.0,464l12,-23"/><path d="M498.5,464l12,-23"/><path d="M503.0,464l12,-23"/><path d="M507.5,464l12,-23"/><path d="M512.0,464l12,-23"/><path d="M516.5,464l12,-23"/><path d="M521.0,464l12,-23"/><path d="M525.5,464l12,-23"/><path d="M530.0,464l12,-23"/><path d="M534.5,464l12,-23"/></g><rect x="506" y="442" width="20" height="21" fill="none" stroke="#707888" stroke-width="1"/><path d="M506,450h20M506,455h20" stroke="#707888" stroke-width="1"/><path d="M523,458l3,2.300l-3,2.300z" fill="#000"/><circle cx="516.200" cy="480.400" r="9.800" fill="#1010d8"/><rect x="514.300" y="478.500" width="4" height="8" fill="#fff"/><circle cx="516.300" cy="474.800" r="2.200" fill="#fff"/><path d="M523,486l3,2.300l-3,2.300z" fill="#000"/><g transform="translate(516,508) rotate(-35)"><rect x="-10" y="-4" width="10" height="8" rx="1.500" fill="#e01818"/><rect x="0" y="-4" width="10" height="8" rx="1.500" fill="#2878d8"/><rect x="-10" y="-4" width="20" height="3" rx="1.500" fill="#fff" opacity=".25"/></g><path d="M506,497v21" stroke="#808080" stroke-width="1"/><path d="M537.500,108.500l12,3.800l-3.400,2.900l7.800,8.300l-2.600,2.500l-7.800,-8.300l-2.900,3.300z" fill="#fff" stroke="#909090" stroke-width="1"/><rect x="546" y="138.500" width="11" height="9" fill="#181818"/><path d="M548,141h7M548,145h7" stroke="#d8d8d8" stroke-width="1.300" stroke-dasharray="1.500 1.200"/><path d="M535,149l3,5.500l12,-8l-3,-5.500z" fill="#282828"/><path d="M538,149.500l3,-2M542.500,146.500l3,-2" stroke="#e8e8e8" stroke-width="1.500"/><path d="M546,139l1,3.500l3.500,-1.500l-2,3.200l3,2l-3.800,.3l-.8,3.500l-1.800,-3.200l-3.600,1l2.300,-2.900l-2.800,-2.300l3.700,-.2z" fill="#f09018"/><circle cx="539.5" cy="138.2" r="3.7" fill="#1818d8"/><rect x="538.7" y="137.39999999999998" width="1.7" height="3.2" fill="#fff"/><circle cx="539.5" cy="136.0" r=".95" fill="#fff"/><circle cx="545" cy="165.500" r="5" fill="#a8a8c8"/><circle cx="540.500" cy="171.500" r="5.500" fill="url(#pgr)"/><circle cx="550.500" cy="173.500" r="5.300" fill="url(#prd)"/><path d="M546,162l1.200,5l4.800,-2.500l-2.800,4.500l4.800,2.500l-5.400,.6l-1,5.400l-2.600,-4.800l-5,2.200l3.400,-4.200l-4.400,-3.200l5.500,-.3z" fill="#f09018" opacity=".9"/><circle cx="552.4" cy="162" r="3.7" fill="#1818d8"/><rect x="551.6" y="161.2" width="1.7" height="3.2" fill="#fff"/><circle cx="552.4" cy="159.8" r=".95" fill="#fff"/><circle cx="543.600" cy="195.600" r="7" fill="url(#pgr)"/><circle cx="551.5" cy="187.4" r="3.7" fill="#1818d8"/><rect x="550.7" y="186.6" width="1.7" height="3.2" fill="#fff"/><circle cx="551.5" cy="185.20000000000002" r=".95" fill="#fff"/><circle cx="543.200" cy="219.400" r="7.700" fill="url(#prd)"/><path d="M539,219.500l3,3.200l6,-7" fill="none" stroke="#38c818" stroke-width="2.200"/><circle cx="552" cy="210.5" r="3.7" fill="#1818d8"/><rect x="551.2" y="209.7" width="1.7" height="3.2" fill="#fff"/><circle cx="552" cy="208.3" r=".95" fill="#fff"/><circle cx="544" cy="241.500" r="8.300" fill="url(#pgr)"/><text x="539.300" y="246.500" font-family="Liberation Serif, serif" font-weight="bold" font-size="13" fill="#102000">π</text><circle cx="553" cy="233.8" r="3.7" fill="#1818d8"/><rect x="552.2" y="233.0" width="1.7" height="3.2" fill="#fff"/><circle cx="553" cy="231.60000000000002" r=".95" fill="#fff"/><path d="M538,259c3,-4 5,2 4,5c-1,4 -5,6 -3,9M537,266c6,-1 10,5 16,-3c1,-2 0,-4 -1,-5" fill="none" stroke="#28704a" stroke-width="1.600"/><circle cx="539" cy="273" r="1.500" fill="#d02020"/><circle cx="552" cy="258" r="1.500" fill="#d02020"/><circle cx="552.5" cy="258" r="3.7" fill="#1818d8"/><rect x="551.7" y="257.2" width="1.7" height="3.2" fill="#fff"/><circle cx="552.5" cy="255.8" r=".95" fill="#fff"/><path d="M537,296.500l8,-13l8,13M540.500,291h9" fill="none" stroke="#28a048" stroke-width="1.800"/><path d="M535.500,294v3.500h5M555.500,294v3.500h-5" fill="none" stroke="#d01818" stroke-width="1.800"/><circle cx="552.5" cy="282.5" r="3.7" fill="#1818d8"/><rect x="551.7" y="281.7" width="1.7" height="3.2" fill="#fff"/><circle cx="552.5" cy="280.3" r=".95" fill="#fff"/><ellipse cx="540" cy="312.500" rx="3" ry="4" fill="none" stroke="#287838" stroke-width="1.200" transform="rotate(-25 540 312.500)"/><circle cx="549.500" cy="322.500" r="3.600" fill="none" stroke="#287838" stroke-width="1.200"/><path d="M537,325l15,-15" stroke="#287838" stroke-width="1.200"/><circle cx="551.5" cy="310.8" r="3.7" fill="#1818d8"/><rect x="550.7" y="310.0" width="1.7" height="3.2" fill="#fff"/><circle cx="551.5" cy="308.6" r=".95" fill="#fff"/><path d="M536.500,333.500h13v7h-4.500v5h-4v5h-4.500z" fill="#20e020" stroke="#108010" stroke-width=".7"/><circle cx="551.5" cy="335" r="3.7" fill="#1818d8"/><rect x="550.7" y="334.2" width="1.7" height="3.2" fill="#fff"/><circle cx="551.5" cy="332.8" r=".95" fill="#fff"/><path d="M536.500,355.500h19.500l-14,17.500h-5.500z" fill="#20e020" stroke="#108010" stroke-width=".7"/><path d="M536,373.500h5l-1,1.500h-4z" fill="#d02020"/><text x="537.300" y="368" font-family="Liberation Sans, sans-serif" font-weight="bold" font-size="7.500" fill="#103010">Txt</text><path d="M536.500,386v16.500h19" fill="none" stroke="#289048" stroke-width="1.600"/><path d="M536.500,388a15,15 0 0 1 14,14" fill="none" stroke="#3850a0" stroke-width="1.100"/><path d="M545,391l3,6" stroke="#3850a0" stroke-width=".8"/><circle cx="552.7" cy="385.8" r="3.7" fill="#1818d8"/><rect x="551.9000000000001" y="385.0" width="1.7" height="3.2" fill="#fff"/><circle cx="552.7" cy="383.6" r=".95" fill="#fff"/><path d="M538,409.500l14.500,15.500" stroke="#287838" stroke-width="1.100"/><path d="M535,414l7,-6M548.500,427.500l7,-6" stroke="#d81818" stroke-width="1.400"/><circle cx="552.2" cy="410" r="3.7" fill="#1818d8"/><rect x="551.4000000000001" y="409.2" width="1.7" height="3.2" fill="#fff"/><circle cx="552.2" cy="407.8" r=".95" fill="#fff"/><path d="M537.500,438.500c1,-6 9,-6 8,0c-1,5 -3,7 -1,10.500c2,3 7,1 8,-2.500" fill="none" stroke="#288048" stroke-width="1.800"/><circle cx="537.500" cy="439" r="1.500" fill="#d02020"/><circle cx="552.500" cy="446.500" r="1.500" fill="#d02020"/><circle cx="552.2" cy="434.2" r="3.7" fill="#1818d8"/><rect x="551.4000000000001" y="433.4" width="1.7" height="3.2" fill="#fff"/><circle cx="552.2" cy="432.0" r=".95" fill="#fff"/><path d="M536.500,463.500c4,2 8,2 12,-1v11c-4,3 -8,3 -12,1z" fill="#18a838"/><path d="M536.500,463.500c2,-3 4,-4.500 6,-5.500l6,4.500c-4,3 -8,3 -12,1z" fill="#e8f8e8" stroke="#18a838" stroke-width=".6"/><path d="M548.500,462.500l4,4v10l-4,-3z" fill="#0a6820"/><circle cx="552.2" cy="462.6" r="3.7" fill="#1818d8"/><rect x="551.4000000000001" y="461.8" width="1.7" height="3.2" fill="#fff"/><circle cx="552.2" cy="460.40000000000003" r=".95" fill="#fff"/><path d="M549,474l3.500,2.500l-3.500,2z" fill="#000"/>
<defs><linearGradient id="lrd" x1="0" y1="0" x2="0" y2="1"><stop offset="0" stop-color="#f0a0a0"/><stop offset=".45" stop-color="#e83020"/><stop offset="1" stop-color="#d82010"/></linearGradient><linearGradient id="lgy" x1="0" y1="0" x2="0" y2="1"><stop offset="0" stop-color="#b0b0b0"/><stop offset="1" stop-color="#f8f8f8"/></linearGradient><radialGradient id="lmg" cx=".4" cy=".35" r=".7"><stop offset="0" stop-color="#ff70b0"/><stop offset="1" stop-color="#c00060"/></radialGradient><radialGradient id="lbs" cx=".4" cy=".35" r=".7"><stop offset="0" stop-color="#7070f0"/><stop offset="1" stop-color="#1818a0"/></radialGradient></defs><path d="M482,78.500l-4,3.500l4,3.500z" fill="#000"/><path d="M487.500,79l6,6M493.500,79l-6,6" stroke="#000" stroke-width="1.600"/><rect x="8.500" y="93.500" width="21" height="20.500" rx="3" fill="url(#lgy)" stroke="#e04030" stroke-width="2"/><path d="M13,101c0,-3 4,-4 10,-4c2,0 3,1 3,3v6c-3,2 -7,2 -10,1c-2,-1 -3,-3 -3,-6z" fill="#a8b0b0" opacity=".8"/><g transform="translate(33,95.5)"><path d="M0,1h4l1,1h5v5.500h-10z" fill="#e8d060"/></g><g transform="translate(42.3,106.3)"><path d="M0,1h4l1,1h5.500v5.500h-10.500z" fill="#f0c850"/></g><path d="M44.500,97h5v5h2l-3.500,3.800l-3.500,-3.800h2v-3h-2z" fill="#1020e0"/><rect x="56.500" y="93.500" width="20.500" height="20.500" rx="3" fill="url(#lrd)" stroke="#d83020" stroke-width="1"/><path d="M63,113c-1,-3 -3,-5 -3,-7c1,-1 2,0 3,1v-6.500c0,-1.300 1.800,-1.300 1.800,0v-1.500c0,-1.300 1.800,-1.300 1.800,0v1c0,-1.300 1.800,-1.300 1.800,0v1c0,-1.200 1.700,-1.200 1.700,0v7c0,2 -.5,3.500 -1,5z" fill="#fff" stroke="#000" stroke-width=".7"/><circle cx="90.800" cy="103.700" r="8.700" fill="#f8f8f8" stroke="#000" stroke-width="1.200"/><path d="M85.500,101l3.500,-1.800v3.600z" fill="#000"/><path d="M89,101h7" stroke="#406090" stroke-width="1.200"/><rect x="93.500" y="107.500" width="6" height="5.500" fill="none" stroke="#e02020" stroke-width="1.100"/><path d="M95,111l3,-3" stroke="#e02020" stroke-width="1"/><circle cx="109.500" cy="98.500" r="4.800" fill="url(#lbs)"/><ellipse cx="110.500" cy="108.700" rx="5.600" ry="4.900" fill="url(#lmg)"/><g transform="translate(113.5,95) scale(0.8)"><circle cx="3" cy="2.2" r="1.9" fill="#e8c840"/><path d="M0.6,5h4.8v5.5h-1v4.5h-2.8v-4.5h-1z" fill="#2890d8"/><circle cx="8" cy="2.2" r="1.9" fill="#e8c840"/><path d="M5.6,5h4.8v5.5h-1v4.5h-2.8v-4.5h-1z" fill="#2890d8"/><circle cx="13" cy="2.2" r="1.9" fill="#e8c840"/><path d="M10.6,5h4.8v5.5h-1v4.5h-2.8v-4.5h-1z" fill="#2890d8"/></g><g transform="translate(15,123)"><path d="M7.16,10.16L9,12" stroke="#d08a4a" stroke-width="2.6" stroke-linecap="round"/><path d="M7.16,10.16L9,12" stroke="#8a5a2a" stroke-width=".6"/><circle cx="4.5" cy="7.5" r="3.8" fill="#e8eef0" stroke="#8a8f98" stroke-width="1.3"/><circle cx="3.55" cy="6.55" r="1.71" fill="#fff" opacity=".7"/><path d="M5,3l5,-3l4,4v8l2,0l-3,3.500l-3.500,-3.500l2,0v-6l-2.500,-2.500l-3,2z" fill="#e0e020" stroke="#808000" stroke-width=".5"/><path d="M11,12.500l3.500,3l-3.500,0z" fill="#000"/></g><g transform="translate(80.2,128)"><path d="M0,8l7,-3.500l7,3.500l-7,3.500z" fill="#f09030"/><path d="M0,6.500l7,-3.500l7,3.500l-7,3.500z" fill="#fff"/><path d="M0,4l7,-4l7,4l-7,4z" fill="#2858b0"/></g><g transform="translate(49.5,148.5)"><path d="M0,1.500h6l1.500,-1.500h7v3h-14.500z" fill="#f8e8c0"/><path d="M0,3h15v10.500h-15z" fill="#f4dc90"/><path d="M4,12c1,-3 5,-5 10.500,-4.500c-3,.5 -4,2 -5,4c-1.500,1.500 -4,1.500 -5.500,.5z" fill="#e8000a"/></g><path d="M364,174l6,-3l8,2v10l-7,3l-7,-2.500z" fill="#788088"/><circle cx="371.500" cy="178.500" r="5" fill="url(#pbl)"/><g transform="translate(364,190.5)"><path d="M0,1.500h5.500l1.500,1.500h8v11h-15z" fill="#ecd078"/><path d="M0,4.500h15v9.500h-15z" fill="#f8e8b0"/><rect x="5" y="8" width="9" height="6.500" fill="#e0e8f4" stroke="#b0bcd0" stroke-width=".5"/></g><g transform="translate(364,209.5)"><path d="M0,1.500h5.500l1.500,1.500h8v11h-15z" fill="#ecd078"/><path d="M0,4.500h15v9.500h-15z" fill="#f8e8b0"/><rect x="5" y="8" width="9" height="6.500" fill="#e0e8f4" stroke="#b0bcd0" stroke-width=".5"/></g><path d="M21,766.5l-3.500,3.500l3.500,3.500" fill="none" stroke="#505050" stroke-width="1.600"/><path d="M322,766.5l3.500,3.500l-3.500,3.500" fill="none" stroke="#505050" stroke-width="1.600"/><path d="M21,984.5l-3.500,3.500l3.500,3.500" fill="none" stroke="#505050" stroke-width="1.600"/><path d="M480,984.5l3.500,3.500l-3.500,3.500" fill="none" stroke="#505050" stroke-width="1.600"/><path d="M13,789h21l-10,11z" fill="#e8e020"/><path d="M20,789h14l-3,4z" fill="#b0a818" opacity=".8"/><path d="M21,791v8M22.500,800l-3,9M24,800l4,9" stroke="#606060" stroke-width="1.200"/><path d="M13,789.500l21,19M34,789.500l-21,19" stroke="#e80850" stroke-width="2.600"/><path d="M42.500,795v12c0,2 12,2 12,0v-12z" fill="#e4e4e4" stroke="#a0a0a0" stroke-width=".8"/><ellipse cx="48.500" cy="795" rx="6" ry="2.500" fill="#f8f8f8" stroke="#a0a0a0" stroke-width=".8"/><path d="M49.500,800c-1,-6 1,-10 6,-11" fill="none" stroke="#2870c0" stroke-width="1.800"/><path d="M53,787.500l4.500,1.500l-3.500,3z" fill="#2870c0"/><path d="M1908.5,114l3.500,-3.500l3.500,3.500" fill="none" stroke="#505050" stroke-width="1.600"/><path d="M1908.5,980l3.500,3.500l3.500,-3.500" fill="none" stroke="#505050" stroke-width="1.600"/><path d="M572,996.5l-3.500,3.500l3.500,3.500" fill="none" stroke="#505050" stroke-width="1.600"/><path d="M1893,996.5l3.500,3.500l-3.500,3.500" fill="none" stroke="#505050" stroke-width="1.600"/><rect x="1856" y="1010" width="62" height="30" fill="#e0e0e0"/><ellipse cx="1884" cy="1025" rx="26" ry="13" fill="#d8102a" transform="rotate(-8 1884 1025)"/><ellipse cx="1878" cy="1019" rx="14" ry="5" fill="#f06070" opacity=".6" transform="rotate(-8 1878 1019)"/><text x="1873" y="1026" font-family="Liberation Sans, sans-serif" font-weight="bold" font-size="10.500" fill="#fff" textLength="28" lengthAdjust="spacingAndGlyphs">Data</text><text x="1878" y="1038" font-family="Liberation Sans, sans-serif" font-weight="bold" font-style="italic" font-size="11.500" fill="#101010" textLength="38" lengthAdjust="spacingAndGlyphs">Solid</text>
</svg>
<svg class="vp" width="1920" height="1040" viewBox="0 0 1920 1040" style="position:absolute;left:0;top:0">
<defs>
<clipPath id="vpc"><rect x="561" y="102" width="1343" height="890"/></clipPath>
<clipPath id="cit"><path d="M1548.46,410.21A381.96,253.57 -13.534 0 1 1236.44,746.13A381.96,253.57 -13.534 0 1 805.74,588.99A381.96,253.57 -13.534 0 1 1117.76,253.07A381.96,253.57 -13.534 0 1 1548.46,410.21Z" /></clipPath>
<clipPath id="cib"><path d="M1575.96,529.51A381.96,253.57 -13.534 0 1 1263.94,865.43A381.96,253.57 -13.534 0 1 833.24,708.29A381.96,253.57 -13.534 0 1 1145.26,372.37A381.96,253.57 -13.534 0 1 1575.96,529.51Z" /></clipPath>
<clipPath id="cot"><path d="M1655.04,384.56A491.59,326.35 -13.534 0 1 1253.47,816.89A491.59,326.35 -13.534 0 1 699.16,614.64A491.59,326.35 -13.534 0 1 1100.73,182.31A491.59,326.35 -13.534 0 1 1655.04,384.56Z" /></clipPath>
<mask id="mtop" maskUnits="userSpaceOnUse" x="0" y="0" width="1920" height="1040"><path d="M1655.04,384.56A491.59,326.35 -13.534 0 1 1253.47,816.89A491.59,326.35 -13.534 0 1 699.16,614.64A491.59,326.35 -13.534 0 1 1100.73,182.31A491.59,326.35 -13.534 0 1 1655.04,384.56Z" fill="#fff"/><path d="M1548.46,410.21A381.96,253.57 -13.534 0 1 1236.44,746.13A381.96,253.57 -13.534 0 1 805.74,588.99A381.96,253.57 -13.534 0 1 1117.76,253.07A381.96,253.57 -13.534 0 1 1548.46,410.21Z" fill="#000"/></mask>
<linearGradient id="gow" gradientUnits="userSpaceOnUse" x1="690" y1="0" x2="1695" y2="0"><stop offset="0" stop-color="#4f6668"/><stop offset="0.04" stop-color="#5f7678"/><stop offset="0.08" stop-color="#6a8284"/><stop offset="0.15" stop-color="#70888a"/><stop offset="0.80" stop-color="#70888a"/><stop offset="0.88" stop-color="#6d8587"/><stop offset="0.93" stop-color="#677f81"/><stop offset="0.96" stop-color="#5f7779"/><stop offset="1" stop-color="#546b6d"/></linearGradient>
<linearGradient id="giw" gradientUnits="userSpaceOnUse" x1="800" y1="0" x2="1555" y2="0"><stop offset="0" stop-color="#526a6c"/><stop offset="0.026" stop-color="#5f7779"/><stop offset="0.08" stop-color="#698183"/><stop offset="0.134" stop-color="#6e8688"/><stop offset="0.25" stop-color="#71898b"/><stop offset="0.75" stop-color="#70888a"/><stop offset="0.92" stop-color="#688082"/><stop offset="1" stop-color="#5d7577"/></linearGradient>
</defs>
<g clip-path="url(#vpc)">
<rect x="561" y="102" width="1343" height="890" fill="#fff"/>
<polygon points="750,140.4 1884.8,166.6 1631,977.8 496.5,951.5" fill="#e0ffff" stroke="#000" stroke-width="1"/>
<path d="M1682.54,503.86A491.59,326.35 -13.534 0 1 1280.97,936.19A491.59,326.35 -13.534 0 1 726.66,733.94A491.59,326.35 -13.534 0 1 1128.23,301.61A491.59,326.35 -13.534 0 1 1682.54,503.86Z" fill="url(#gow)"/>
<polygon points="1655.5,386.6 1683.0,505.9 726.2,731.9 698.7,612.6" fill="url(#gow)"/>
<path d="M1655.04,384.56A491.59,326.35 -13.534 0 1 1253.47,816.89A491.59,326.35 -13.534 0 1 699.16,614.64A491.59,326.35 -13.534 0 1 1100.73,182.31A491.59,326.35 -13.534 0 1 1655.04,384.56Z" fill="#96acac"/>
<path d="M1548.46,410.21A381.96,253.57 -13.534 0 1 1236.44,746.13A381.96,253.57 -13.534 0 1 805.74,588.99A381.96,253.57 -13.534 0 1 1117.76,253.07A381.96,253.57 -13.534 0 1 1548.46,410.21Z" fill="url(#giw)"/>
<g clip-path="url(#cit)"><path d="M1575.96,529.51A381.96,253.57 -13.534 0 1 1263.94,865.43A381.96,253.57 -13.534 0 1 833.24,708.29A381.96,253.57 -13.534 0 1 1145.26,372.37A381.96,253.57 -13.534 0 1 1575.96,529.51Z" fill="#e0ffff"/></g>
<polygon points="800.5,545 803,585 810,615 820,652 831.5,704 833.5,648 828,620 818,590 808,560" fill="#536a6c"/>
<polygon points="1533,375 1543,398 1558,455 1572.5,511 1552,477 1545,440 1520,390" fill="#5f7779"/>
<linearGradient id="gc180" gradientUnits="userSpaceOnUse" x1="816.6" y1="573.7" x2="831.0" y2="527.9"><stop offset="0" stop-color="#a2b8b8"/><stop offset="0.6" stop-color="#97adad"/><stop offset="1" stop-color="#7d9596"/></linearGradient>
<g mask="url(#mtop)"><polygon points="763.5,553.1 763.5,548.8 763.8,544.5 764.1,540.3 764.7,536.3 765.5,532.7 766.3,529.5 767.3,526.7 768.4,524.6 769.5,523.0 770.7,522.1 771.9,521.9 824.6,523.1 825.8,523.6 826.9,524.7 828.0,526.5 828.9,528.9 829.7,531.8 830.4,535.2 830.9,538.9 831.3,543.0 831.4,547.2 831.4,551.6 831.2,555.9 830.8,560.1 830.2,564.0 829.5,567.7 828.6,570.9 827.6,573.6 826.5,575.8 825.4,577.3 824.2,578.2 823.0,578.4 770.3,577.2 769.1,576.8 768.0,575.6 767.0,573.8 766.0,571.5 765.2,568.6 764.5,565.2 764.0,561.4 763.6,557.4" fill="#8ea4a5"/></g>
<g clip-path="url(#cit)"><polygon points="763.5,553.1 763.5,548.8 763.8,544.5 764.1,540.3 764.7,536.3 765.5,532.7 766.3,529.5 767.3,526.7 768.4,524.6 769.5,523.0 770.7,522.1 771.9,521.9 824.6,523.1 825.8,523.6 826.9,524.7 828.0,526.5 828.9,528.9 829.7,531.8 830.4,535.2 830.9,538.9 831.3,543.0 831.4,547.2 831.4,551.6 831.2,555.9 830.8,560.1 830.2,564.0 829.5,567.7 828.6,570.9 827.6,573.6 826.5,575.8 825.4,577.3 824.2,578.2 823.0,578.4 770.3,577.2 769.1,576.8 768.0,575.6 767.0,573.8 766.0,571.5 765.2,568.6 764.5,565.2 764.0,561.4 763.6,557.4" fill="#5a7173"/></g>
<polygon points="829.7,531.8 830.4,535.2 830.9,538.9 831.3,543.0 831.4,547.2 831.4,551.6 831.2,555.9 830.8,560.1 830.2,564.0 829.5,567.7 828.6,570.9 827.6,573.6 826.5,575.8 825.4,577.3 824.2,578.2 823.0,578.4 821.8,578.0 820.7,576.8 819.6,575.1 818.7,572.7 817.9,569.8 817.2,566.4 816.7,562.6 816.3,558.6 816.2,554.3 816.2,550.0 816.4,545.7 816.8,541.5 817.4,537.5 818.1,533.9 819.0,530.7 820.0,527.9 821.1,525.8 822.2,524.2 823.4,523.3 824.6,523.1 825.8,523.6 826.9,524.7 828.0,526.5 828.9,528.9" fill="url(#gc180)"/>
<linearGradient id="gc225" gradientUnits="userSpaceOnUse" x1="968.4" y1="379.7" x2="1010.2" y2="356.1"><stop offset="0" stop-color="#a2b8b8"/><stop offset="0.6" stop-color="#97adad"/><stop offset="1" stop-color="#7d9596"/></linearGradient>
<linearGradient id="gf225" gradientUnits="userSpaceOnUse" x1="993.8" y1="334.2" x2="955.8" y2="374.3"><stop offset="0" stop-color="#93a9aa"/><stop offset="0.5" stop-color="#849b9c"/><stop offset="1" stop-color="#6a8284"/></linearGradient>
<g mask="url(#mtop)"><polygon points="936.9,350.2 937.0,346.6 937.7,342.9 938.9,339.2 940.7,335.4 942.9,331.9 945.6,328.5 948.7,325.4 952.0,322.6 955.5,320.4 959.2,318.6 962.9,317.3 966.5,316.7 970.0,316.6 973.2,317.1 976.1,318.1 978.7,319.8 1007.6,347.2 1009.7,349.4 1011.2,352.0 1012.3,354.9 1012.7,358.2 1012.6,361.8 1011.9,365.5 1010.7,369.2 1008.9,373.0 1006.7,376.6 1004.0,380.0 1000.9,383.1 997.6,385.8 994.1,388.1 990.4,389.8 986.7,391.1 983.1,391.8 979.6,391.9 976.4,391.4 973.5,390.3 971.0,388.6 942.0,361.2 939.9,359.1 938.4,356.5 937.3,353.5" fill="url(#gf225)"/></g>
<g clip-path="url(#cit)"><polygon points="936.9,350.2 937.0,346.6 937.7,342.9 938.9,339.2 940.7,335.4 942.9,331.9 945.6,328.5 948.7,325.4 952.0,322.6 955.5,320.4 959.2,318.6 962.9,317.3 966.5,316.7 970.0,316.6 973.2,317.1 976.1,318.1 978.7,319.8 1007.6,347.2 1009.7,349.4 1011.2,352.0 1012.3,354.9 1012.7,358.2 1012.6,361.8 1011.9,365.5 1010.7,369.2 1008.9,373.0 1006.7,376.6 1004.0,380.0 1000.9,383.1 997.6,385.8 994.1,388.1 990.4,389.8 986.7,391.1 983.1,391.8 979.6,391.9 976.4,391.4 973.5,390.3 971.0,388.6 942.0,361.2 939.9,359.1 938.4,356.5 937.3,353.5" fill="#647b7d"/></g>
<polygon points="1012.3,354.9 1012.7,358.3 1012.6,361.8 1011.9,365.5 1010.7,369.3 1008.9,373.0 1006.7,376.6 1004.0,380.0 1000.9,383.1 997.6,385.8 994.1,388.1 990.4,389.8 986.7,391.1 983.1,391.8 979.6,391.9 976.4,391.4 973.5,390.3 970.9,388.7 968.9,386.5 967.3,383.9 966.3,380.9 965.8,377.6 965.9,374.1 966.6,370.4 967.8,366.6 969.6,362.9 971.9,359.3 974.5,355.9 977.6,352.8 980.9,350.1 984.5,347.8 988.1,346.0 991.8,344.8 995.4,344.1 998.9,344.0 1002.1,344.5 1005.1,345.6 1007.6,347.2 1009.7,349.4 1011.2,352.0" fill="url(#gc225)"/>
<linearGradient id="gc270" gradientUnits="userSpaceOnUse" x1="1248.8" y1="296.6" x2="1296.8" y2="297.7"><stop offset="0" stop-color="#a2b8b8"/><stop offset="0.6" stop-color="#97adad"/><stop offset="1" stop-color="#7d9596"/></linearGradient>
<linearGradient id="gf270" gradientUnits="userSpaceOnUse" x1="1252.4" y1="270.1" x2="1305.0" y2="286.6"><stop offset="0" stop-color="#93a9aa"/><stop offset="0.5" stop-color="#849b9c"/><stop offset="1" stop-color="#6a8284"/></linearGradient>
<g mask="url(#mtop)"><polygon points="1245.8,293.4 1246.0,290.4 1247.0,287.5 1258.7,249.9 1260.2,247.2 1262.4,244.9 1265.1,242.9 1268.2,241.4 1271.8,240.2 1275.7,239.6 1279.8,239.4 1284.0,239.8 1288.2,240.6 1292.4,241.9 1296.3,243.7 1300.0,245.8 1303.3,248.2 1306.1,251.0 1308.4,253.9 1310.1,257.0 1311.2,260.2 1311.6,263.3 1311.4,266.4 1310.5,269.2 1298.7,306.9 1297.2,309.5 1295.0,311.8 1292.3,313.8 1289.2,315.4 1285.6,316.5 1281.7,317.1 1277.6,317.3 1273.4,316.9 1269.2,316.1 1265.0,314.8 1261.1,313.1 1257.4,311.0 1254.1,308.5 1251.3,305.8 1249.0,302.8 1247.3,299.7 1246.2,296.6" fill="url(#gf270)"/></g>
<g clip-path="url(#cit)"><polygon points="1245.8,293.4 1246.0,290.4 1247.0,287.5 1258.7,249.9 1260.2,247.2 1262.4,244.9 1265.1,242.9 1268.2,241.4 1271.8,240.2 1275.7,239.6 1279.8,239.4 1284.0,239.8 1288.2,240.6 1292.4,241.9 1296.3,243.7 1300.0,245.8 1303.3,248.2 1306.1,251.0 1308.4,253.9 1310.1,257.0 1311.2,260.2 1311.6,263.3 1311.4,266.4 1310.5,269.2 1298.7,306.9 1297.2,309.5 1295.0,311.8 1292.3,313.8 1289.2,315.4 1285.6,316.5 1281.7,317.1 1277.6,317.3 1273.4,316.9 1269.2,316.1 1265.0,314.8 1261.1,313.1 1257.4,311.0 1254.1,308.5 1251.3,305.8 1249.0,302.8 1247.3,299.7 1246.2,296.6" fill="#647b7d"/></g>
<polygon points="1299.4,297.8 1299.8,300.9 1299.6,304.0 1298.7,306.8 1297.2,309.5 1295.0,311.8 1292.3,313.8 1289.2,315.4 1285.6,316.5 1281.7,317.1 1277.6,317.3 1273.4,316.9 1269.2,316.1 1265.0,314.8 1261.1,313.1 1257.4,311.0 1254.1,308.5 1251.3,305.8 1249.0,302.8 1247.3,299.7 1246.2,296.6 1245.8,293.4 1246.0,290.4 1246.9,287.5 1248.5,284.8 1250.6,282.5 1253.3,280.5 1256.5,279.0 1260.0,277.8 1263.9,277.2 1268.0,277.1 1272.2,277.4 1276.5,278.2 1280.6,279.5 1284.6,281.3 1288.2,283.4 1291.5,285.8 1294.3,288.6 1296.6,291.5 1298.3,294.6" fill="url(#gc270)"/>
<linearGradient id="gc315" gradientUnits="userSpaceOnUse" x1="1491.0" y1="363.4" x2="1525.8" y2="396.4"><stop offset="0" stop-color="#a2b8b8"/><stop offset="0.6" stop-color="#97adad"/><stop offset="1" stop-color="#7d9596"/></linearGradient>
<linearGradient id="gf315" gradientUnits="userSpaceOnUse" x1="1517.5" y1="343.0" x2="1544.7" y2="391.1"><stop offset="0" stop-color="#93a9aa"/><stop offset="0.5" stop-color="#849b9c"/><stop offset="1" stop-color="#6a8284"/></linearGradient>
<g mask="url(#mtop)"><polygon points="1493.0,360.5 1493.2,358.4 1493.7,356.9 1494.6,355.9 1540.2,330.2 1541.5,329.8 1543.0,330.0 1544.8,330.8 1546.9,332.1 1549.1,334.1 1551.5,336.5 1553.9,339.3 1556.3,342.6 1558.6,346.1 1560.9,349.8 1562.9,353.6 1564.8,357.4 1566.3,361.1 1567.6,364.7 1568.5,368.1 1569.1,371.0 1569.3,373.6 1569.1,375.7 1568.6,377.2 1567.6,378.2 1522.1,403.9 1520.8,404.3 1519.3,404.1 1517.4,403.3 1515.4,402.0 1513.2,400.0 1510.8,397.6 1508.4,394.8 1506.0,391.6 1503.7,388.1 1501.4,384.3 1499.4,380.5 1497.5,376.7 1496.0,372.9 1494.7,369.4 1493.8,366.1 1493.2,363.1" fill="url(#gf315)"/></g>
<g clip-path="url(#cit)"><polygon points="1493.0,360.5 1493.2,358.4 1493.7,356.9 1494.6,355.9 1540.2,330.2 1541.5,329.8 1543.0,330.0 1544.8,330.8 1546.9,332.1 1549.1,334.1 1551.5,336.5 1553.9,339.3 1556.3,342.6 1558.6,346.1 1560.9,349.8 1562.9,353.6 1564.8,357.4 1566.3,361.1 1567.6,364.7 1568.5,368.1 1569.1,371.0 1569.3,373.6 1569.1,375.7 1568.6,377.2 1567.6,378.2 1522.1,403.9 1520.8,404.3 1519.3,404.1 1517.4,403.3 1515.4,402.0 1513.2,400.0 1510.8,397.6 1508.4,394.8 1506.0,391.6 1503.7,388.1 1501.4,384.3 1499.4,380.5 1497.5,376.7 1496.0,372.9 1494.7,369.4 1493.8,366.1 1493.2,363.1" fill="#647b7d"/></g>
<polygon points="1523.0,393.8 1523.5,396.8 1523.7,399.3 1523.6,401.4 1523.0,403.0 1522.1,403.9 1520.8,404.3 1519.3,404.1 1517.4,403.3 1515.4,402.0 1513.2,400.0 1510.8,397.6 1508.4,394.8 1506.0,391.5 1503.7,388.0 1501.4,384.3 1499.4,380.5 1497.5,376.7 1496.0,373.0 1494.7,369.4 1493.8,366.1 1493.2,363.1 1493.0,360.5 1493.2,358.4 1493.7,356.9 1494.6,355.9 1495.9,355.5 1497.5,355.7 1499.3,356.5 1501.3,357.9 1503.6,359.8 1505.9,362.2 1508.3,365.1 1510.7,368.3 1513.1,371.8 1515.3,375.5 1517.4,379.3 1519.2,383.1 1520.8,386.9 1522.0,390.5" fill="url(#gc315)"/>
<linearGradient id="gb0" gradientUnits="userSpaceOnUse" x1="1584.9" y1="540.7" x2="1583.6" y2="596.0"><stop offset="0" stop-color="#5e7678"/><stop offset="0.35" stop-color="#82999a"/><stop offset="0.75" stop-color="#90a6a7"/><stop offset="1" stop-color="#8ba1a2"/></linearGradient>
<path d="M1550.3,571.3 L1550.3,566.9 L1550.5,562.6 L1550.9,558.4 L1551.5,554.5 L1552.2,550.8 L1553.1,547.6 L1554.1,544.9 L1555.2,542.7 L1556.3,541.2 L1557.5,540.3 L1558.7,540.1 L1611.4,541.3 L1612.6,541.8 L1613.7,542.9 L1614.7,544.7 L1615.7,547.0 L1616.5,549.9 L1617.2,553.3 L1617.7,557.1 L1618.0,561.1 L1618.2,565.4 L1618.2,569.7 L1618.0,574.0 L1617.5,578.2 L1617.0,582.2 L1616.2,585.8 L1615.4,589.0 L1614.4,591.8 L1613.3,593.9 L1612.2,595.5 L1611.0,596.4 L1609.8,596.6 L1557.1,595.4 L1555.9,594.9 L1554.8,593.8 L1553.7,592.0 L1552.8,589.6 L1552.0,586.7 L1551.3,583.3 L1550.8,579.6 L1550.4,575.5Z M1552.0,586.7 L1552.8,589.6 L1553.7,592.0 L1554.8,593.8 L1555.9,594.9 L1557.1,595.4 L1558.3,595.2 L1559.5,594.3 L1560.6,592.7 L1561.7,590.6 L1562.7,587.8 L1563.6,584.6 L1564.3,581.0 L1564.9,577.0 L1565.3,572.8 L1565.5,568.5 L1565.5,564.2 L1565.4,559.9 L1565.0,555.9 L1564.5,552.1 L1563.8,548.7 L1563.0,545.8 L1562.1,543.4 L1561.0,541.7 L1559.9,540.5 L1558.7,540.1 L1557.5,540.3 L1556.3,541.2 L1555.2,542.7 L1554.1,544.9 L1553.1,547.6 L1552.2,550.8 L1551.5,554.5 L1550.9,558.4 L1550.5,562.6 L1550.3,566.9 L1550.3,571.3 L1550.4,575.5 L1550.8,579.6 L1551.3,583.3Z" fill-rule="evenodd" fill="rgba(20,40,42,0.13)"/>
<g mask="url(#mtop)"><path d="M1550.3,571.3 L1550.3,566.9 L1550.5,562.6 L1550.9,558.4 L1551.5,554.5 L1552.2,550.8 L1553.1,547.6 L1554.1,544.9 L1555.2,542.7 L1556.3,541.2 L1557.5,540.3 L1558.7,540.1 L1611.4,541.3 L1612.6,541.8 L1613.7,542.9 L1614.7,544.7 L1615.7,547.0 L1616.5,549.9 L1617.2,553.3 L1617.7,557.1 L1618.0,561.1 L1618.2,565.4 L1618.2,569.7 L1618.0,574.0 L1617.5,578.2 L1617.0,582.2 L1616.2,585.8 L1615.4,589.0 L1614.4,591.8 L1613.3,593.9 L1612.2,595.5 L1611.0,596.4 L1609.8,596.6 L1557.1,595.4 L1555.9,594.9 L1554.8,593.8 L1553.7,592.0 L1552.8,589.6 L1552.0,586.7 L1551.3,583.3 L1550.8,579.6 L1550.4,575.5Z M1552.0,586.7 L1552.8,589.6 L1553.7,592.0 L1554.8,593.8 L1555.9,594.9 L1557.1,595.4 L1558.3,595.2 L1559.5,594.3 L1560.6,592.7 L1561.7,590.6 L1562.7,587.8 L1563.6,584.6 L1564.3,581.0 L1564.9,577.0 L1565.3,572.8 L1565.5,568.5 L1565.5,564.2 L1565.4,559.9 L1565.0,555.9 L1564.5,552.1 L1563.8,548.7 L1563.0,545.8 L1562.1,543.4 L1561.0,541.7 L1559.9,540.5 L1558.7,540.1 L1557.5,540.3 L1556.3,541.2 L1555.2,542.7 L1554.1,544.9 L1553.1,547.6 L1552.2,550.8 L1551.5,554.5 L1550.9,558.4 L1550.5,562.6 L1550.3,566.9 L1550.3,571.3 L1550.4,575.5 L1550.8,579.6 L1551.3,583.3Z" fill-rule="evenodd" fill="url(#gb0)"/></g>
<linearGradient id="gb45" gradientUnits="userSpaceOnUse" x1="1425.9" y1="744.2" x2="1387.9" y2="784.3"><stop offset="0" stop-color="#5e7678"/><stop offset="0.35" stop-color="#82999a"/><stop offset="0.75" stop-color="#90a6a7"/><stop offset="1" stop-color="#8ba1a2"/></linearGradient>
<path d="M1369.0,760.2 L1369.1,756.7 L1369.8,753.0 L1371.0,749.2 L1372.8,745.5 L1375.0,741.9 L1377.7,738.5 L1380.8,735.4 L1384.1,732.7 L1387.6,730.4 L1391.3,728.7 L1395.0,727.4 L1398.6,726.7 L1402.1,726.6 L1405.3,727.1 L1408.2,728.2 L1410.8,729.9 L1439.7,757.3 L1441.8,759.4 L1443.3,762.0 L1444.4,765.0 L1444.8,768.3 L1444.7,771.9 L1444.0,775.6 L1442.8,779.3 L1441.0,783.0 L1438.8,786.6 L1436.1,790.0 L1433.0,793.1 L1429.7,795.9 L1426.2,798.1 L1422.5,799.9 L1418.8,801.2 L1415.2,801.8 L1411.7,801.9 L1408.5,801.4 L1405.6,800.4 L1403.0,798.7 L1374.1,771.3 L1372.0,769.1 L1370.5,766.5 L1369.4,763.5Z M1369.4,763.6 L1370.5,766.5 L1372.0,769.1 L1374.1,771.3 L1376.6,772.9 L1379.6,774.0 L1382.8,774.5 L1386.3,774.4 L1389.9,773.7 L1393.6,772.5 L1397.2,770.7 L1400.8,768.4 L1404.1,765.7 L1407.2,762.6 L1409.8,759.2 L1412.1,755.6 L1413.9,751.9 L1415.1,748.1 L1415.8,744.4 L1415.9,740.9 L1415.4,737.6 L1414.4,734.6 L1412.8,732.0 L1410.8,729.8 L1408.2,728.2 L1405.3,727.1 L1402.1,726.6 L1398.6,726.7 L1395.0,727.4 L1391.3,728.7 L1387.6,730.4 L1384.1,732.7 L1380.8,735.4 L1377.7,738.5 L1375.0,741.9 L1372.8,745.5 L1371.0,749.2 L1369.8,753.0 L1369.1,756.7 L1369.0,760.2Z" fill-rule="evenodd" fill="rgba(20,40,42,0.13)"/>
<g mask="url(#mtop)"><path d="M1369.0,760.2 L1369.1,756.7 L1369.8,753.0 L1371.0,749.2 L1372.8,745.5 L1375.0,741.9 L1377.7,738.5 L1380.8,735.4 L1384.1,732.7 L1387.6,730.4 L1391.3,728.7 L1395.0,727.4 L1398.6,726.7 L1402.1,726.6 L1405.3,727.1 L1408.2,728.2 L1410.8,729.9 L1439.7,757.3 L1441.8,759.4 L1443.3,762.0 L1444.4,765.0 L1444.8,768.3 L1444.7,771.9 L1444.0,775.6 L1442.8,779.3 L1441.0,783.0 L1438.8,786.6 L1436.1,790.0 L1433.0,793.1 L1429.7,795.9 L1426.2,798.1 L1422.5,799.9 L1418.8,801.2 L1415.2,801.8 L1411.7,801.9 L1408.5,801.4 L1405.6,800.4 L1403.0,798.7 L1374.1,771.3 L1372.0,769.1 L1370.5,766.5 L1369.4,763.5Z M1369.4,763.6 L1370.5,766.5 L1372.0,769.1 L1374.1,771.3 L1376.6,772.9 L1379.6,774.0 L1382.8,774.5 L1386.3,774.4 L1389.9,773.7 L1393.6,772.5 L1397.2,770.7 L1400.8,768.4 L1404.1,765.7 L1407.2,762.6 L1409.8,759.2 L1412.1,755.6 L1413.9,751.9 L1415.1,748.1 L1415.8,744.4 L1415.9,740.9 L1415.4,737.6 L1414.4,734.6 L1412.8,732.0 L1410.8,729.8 L1408.2,728.2 L1405.3,727.1 L1402.1,726.6 L1398.6,726.7 L1395.0,727.4 L1391.3,728.7 L1387.6,730.4 L1384.1,732.7 L1380.8,735.4 L1377.7,738.5 L1375.0,741.9 L1372.8,745.5 L1371.0,749.2 L1369.8,753.0 L1369.1,756.7 L1369.0,760.2Z" fill-rule="evenodd" fill="url(#gb45)"/></g>
<linearGradient id="gb90" gradientUnits="userSpaceOnUse" x1="1076.7" y1="831.9" x2="1129.3" y2="848.4"><stop offset="0" stop-color="#5e7678"/><stop offset="0.35" stop-color="#82999a"/><stop offset="0.75" stop-color="#90a6a7"/><stop offset="1" stop-color="#8ba1a2"/></linearGradient>
<path d="M1070.1,855.2 L1070.3,852.1 L1071.2,849.3 L1083.0,811.6 L1084.5,809.0 L1086.7,806.7 L1089.4,804.7 L1092.5,803.1 L1096.1,802.0 L1100.0,801.4 L1104.1,801.2 L1108.3,801.6 L1112.5,802.4 L1116.7,803.7 L1120.6,805.4 L1124.3,807.5 L1127.6,810.0 L1130.4,812.8 L1132.7,815.7 L1134.4,818.8 L1135.5,822.0 L1135.9,825.1 L1135.7,828.1 L1134.8,831.0 L1123.0,868.6 L1121.5,871.3 L1119.3,873.6 L1116.6,875.6 L1113.5,877.1 L1109.9,878.3 L1106.0,878.9 L1101.9,879.1 L1097.7,878.7 L1093.5,877.9 L1089.3,876.6 L1085.4,874.9 L1081.7,872.7 L1078.4,870.3 L1075.6,867.5 L1073.3,864.6 L1071.6,861.5 L1070.5,858.3Z M1082.3,820.7 L1083.4,823.9 L1085.1,827.0 L1087.4,829.9 L1090.2,832.7 L1093.5,835.1 L1097.1,837.2 L1101.1,839.0 L1105.2,840.3 L1109.5,841.1 L1113.7,841.4 L1117.8,841.3 L1121.7,840.7 L1125.2,839.5 L1128.4,838.0 L1131.1,836.0 L1133.2,833.7 L1134.8,831.0 L1135.7,828.1 L1135.9,825.1 L1135.5,821.9 L1134.4,818.8 L1132.7,815.7 L1130.4,812.7 L1127.6,810.0 L1124.3,807.5 L1120.6,805.4 L1116.7,803.7 L1112.5,802.4 L1108.3,801.6 L1104.1,801.2 L1100.0,801.4 L1096.1,802.0 L1092.5,803.1 L1089.4,804.7 L1086.7,806.7 L1084.5,809.0 L1083.0,811.7 L1082.1,814.5 L1081.9,817.6Z" fill-rule="evenodd" fill="rgba(20,40,42,0.13)"/>
<g mask="url(#mtop)"><path d="M1070.1,855.2 L1070.3,852.1 L1071.2,849.3 L1083.0,811.6 L1084.5,809.0 L1086.7,806.7 L1089.4,804.7 L1092.5,803.1 L1096.1,802.0 L1100.0,801.4 L1104.1,801.2 L1108.3,801.6 L1112.5,802.4 L1116.7,803.7 L1120.6,805.4 L1124.3,807.5 L1127.6,810.0 L1130.4,812.8 L1132.7,815.7 L1134.4,818.8 L1135.5,822.0 L1135.9,825.1 L1135.7,828.1 L1134.8,831.0 L1123.0,868.6 L1121.5,871.3 L1119.3,873.6 L1116.6,875.6 L1113.5,877.1 L1109.9,878.3 L1106.0,878.9 L1101.9,879.1 L1097.7,878.7 L1093.5,877.9 L1089.3,876.6 L1085.4,874.9 L1081.7,872.7 L1078.4,870.3 L1075.6,867.5 L1073.3,864.6 L1071.6,861.5 L1070.5,858.3Z M1082.3,820.7 L1083.4,823.9 L1085.1,827.0 L1087.4,829.9 L1090.2,832.7 L1093.5,835.1 L1097.1,837.2 L1101.1,839.0 L1105.2,840.3 L1109.5,841.1 L1113.7,841.4 L1117.8,841.3 L1121.7,840.7 L1125.2,839.5 L1128.4,838.0 L1131.1,836.0 L1133.2,833.7 L1134.8,831.0 L1135.7,828.1 L1135.9,825.1 L1135.5,821.9 L1134.4,818.8 L1132.7,815.7 L1130.4,812.7 L1127.6,810.0 L1124.3,807.5 L1120.6,805.4 L1116.7,803.7 L1112.5,802.4 L1108.3,801.6 L1104.1,801.2 L1100.0,801.4 L1096.1,802.0 L1092.5,803.1 L1089.4,804.7 L1086.7,806.7 L1084.5,809.0 L1083.0,811.7 L1082.1,814.5 L1081.9,817.6Z" fill-rule="evenodd" fill="url(#gb90)"/></g>
<linearGradient id="gb135" gradientUnits="userSpaceOnUse" x1="837.0" y1="727.4" x2="864.2" y2="775.5"><stop offset="0" stop-color="#5e7678"/><stop offset="0.35" stop-color="#82999a"/><stop offset="0.75" stop-color="#90a6a7"/><stop offset="1" stop-color="#8ba1a2"/></linearGradient>
<path d="M812.4,744.9 L812.6,742.8 L813.1,741.3 L814.1,740.3 L859.6,714.6 L860.9,714.2 L862.4,714.4 L864.3,715.2 L866.3,716.5 L868.5,718.5 L870.9,720.9 L873.3,723.7 L875.7,727.0 L878.0,730.5 L880.3,734.2 L882.3,738.0 L884.2,741.8 L885.8,745.5 L887.0,749.1 L888.0,752.4 L888.5,755.4 L888.7,758.0 L888.5,760.1 L888.0,761.6 L887.1,762.6 L841.5,788.3 L840.2,788.7 L838.7,788.5 L836.9,787.7 L834.8,786.4 L832.6,784.4 L830.2,782.0 L827.8,779.2 L825.4,776.0 L823.1,772.4 L820.8,768.7 L818.8,764.9 L816.9,761.1 L815.4,757.4 L814.1,753.8 L813.2,750.5 L812.6,747.5Z M858.7,724.7 L859.7,728.0 L860.9,731.6 L862.5,735.4 L864.3,739.2 L866.4,743.0 L868.6,746.7 L871.0,750.2 L873.4,753.4 L875.8,756.3 L878.1,758.7 L880.4,760.6 L882.4,762.0 L884.2,762.8 L885.8,763.0 L887.1,762.6 L888.0,761.6 L888.5,760.1 L888.7,758.0 L888.5,755.4 L887.9,752.4 L887.0,749.1 L885.7,745.5 L884.2,741.8 L882.3,738.0 L880.3,734.2 L878.0,730.5 L875.7,727.0 L873.3,723.7 L870.9,720.9 L868.5,718.5 L866.3,716.5 L864.3,715.2 L862.4,714.4 L860.9,714.2 L859.6,714.6 L858.7,715.5 L858.1,717.1 L858.0,719.2 L858.2,721.7Z" fill-rule="evenodd" fill="rgba(20,40,42,0.13)"/>
<g mask="url(#mtop)"><path d="M812.4,744.9 L812.6,742.8 L813.1,741.3 L814.1,740.3 L859.6,714.6 L860.9,714.2 L862.4,714.4 L864.3,715.2 L866.3,716.5 L868.5,718.5 L870.9,720.9 L873.3,723.7 L875.7,727.0 L878.0,730.5 L880.3,734.2 L882.3,738.0 L884.2,741.8 L885.8,745.5 L887.0,749.1 L888.0,752.4 L888.5,755.4 L888.7,758.0 L888.5,760.1 L888.0,761.6 L887.1,762.6 L841.5,788.3 L840.2,788.7 L838.7,788.5 L836.9,787.7 L834.8,786.4 L832.6,784.4 L830.2,782.0 L827.8,779.2 L825.4,776.0 L823.1,772.4 L820.8,768.7 L818.8,764.9 L816.9,761.1 L815.4,757.4 L814.1,753.8 L813.2,750.5 L812.6,747.5Z M858.7,724.7 L859.7,728.0 L860.9,731.6 L862.5,735.4 L864.3,739.2 L866.4,743.0 L868.6,746.7 L871.0,750.2 L873.4,753.4 L875.8,756.3 L878.1,758.7 L880.4,760.6 L882.4,762.0 L884.2,762.8 L885.8,763.0 L887.1,762.6 L888.0,761.6 L888.5,760.1 L888.7,758.0 L888.5,755.4 L887.9,752.4 L887.0,749.1 L885.7,745.5 L884.2,741.8 L882.3,738.0 L880.3,734.2 L878.0,730.5 L875.7,727.0 L873.3,723.7 L870.9,720.9 L868.5,718.5 L866.3,716.5 L864.3,715.2 L862.4,714.4 L860.9,714.2 L859.6,714.6 L858.7,715.5 L858.1,717.1 L858.0,719.2 L858.2,721.7Z" fill-rule="evenodd" fill="url(#gb135)"/></g>
<line x1="576.1" y1="486.1" x2="1776.1" y2="513.1" stroke="#1a1a8c" stroke-width="1.2" stroke-dasharray="8 3 2 3"/>
<line x1="606.6" y1="605.4" x2="1804.6" y2="632.4" stroke="#1a1a8c" stroke-width="1.2" stroke-dasharray="8 3 2 3"/>
<line x1="1309.7" y1="68.6" x2="1044.5" y2="930.6" stroke="#1a1a8c" stroke-width="1.2" stroke-dasharray="8 3 2 3"/>
<line x1="1336.6" y1="189.9" x2="1072.6" y2="1047.9" stroke="#1a1a8c" stroke-width="1.2" stroke-dasharray="8 3 2 3"/>
<line x1="1153.5" y1="402.5" x2="1228.6" y2="717.4" stroke="#1a1a8c" stroke-width="1.2" stroke-dasharray="8 3 2 3"/>
<path d="M974.5,101 L1085.7,556.5 L1226.5,101" fill="none" stroke="#adb3b3" stroke-width="1"/>
<g clip-path="url(#cot)"><path d="M974.5,101 L1085.7,556.5 L1226.5,101" fill="none" stroke="#d6dede" stroke-width="1"/></g>
<g clip-path="url(#cit)"><g clip-path="url(#cib)"><path d="M974.5,101 L1085.7,556.5 L1226.5,101" fill="none" stroke="#adb3b3" stroke-width="1"/></g></g>
<path d="M1190.8,559.5 L1162.5,558.6 M1190.8,559.5 L1185.8,539 M1190.8,559.5 L1196.5,539.6" fill="none" stroke="#000" stroke-width="1"/>
<text x="1160.2" y="558.6" font-family="Liberation Sans, sans-serif" font-size="13.3" fill="#000" textLength="10.8" lengthAdjust="spacingAndGlyphs">Y</text>
<text x="1184.5" y="538" font-family="Liberation Sans, sans-serif" font-size="13.3" fill="#000" textLength="9.4" lengthAdjust="spacingAndGlyphs">Z</text>
<text x="1197" y="538.6" font-family="Liberation Sans, sans-serif" font-size="13.3" fill="#000" textLength="9.4" lengthAdjust="spacingAndGlyphs">X</text>
</g></svg>
</body></html>
